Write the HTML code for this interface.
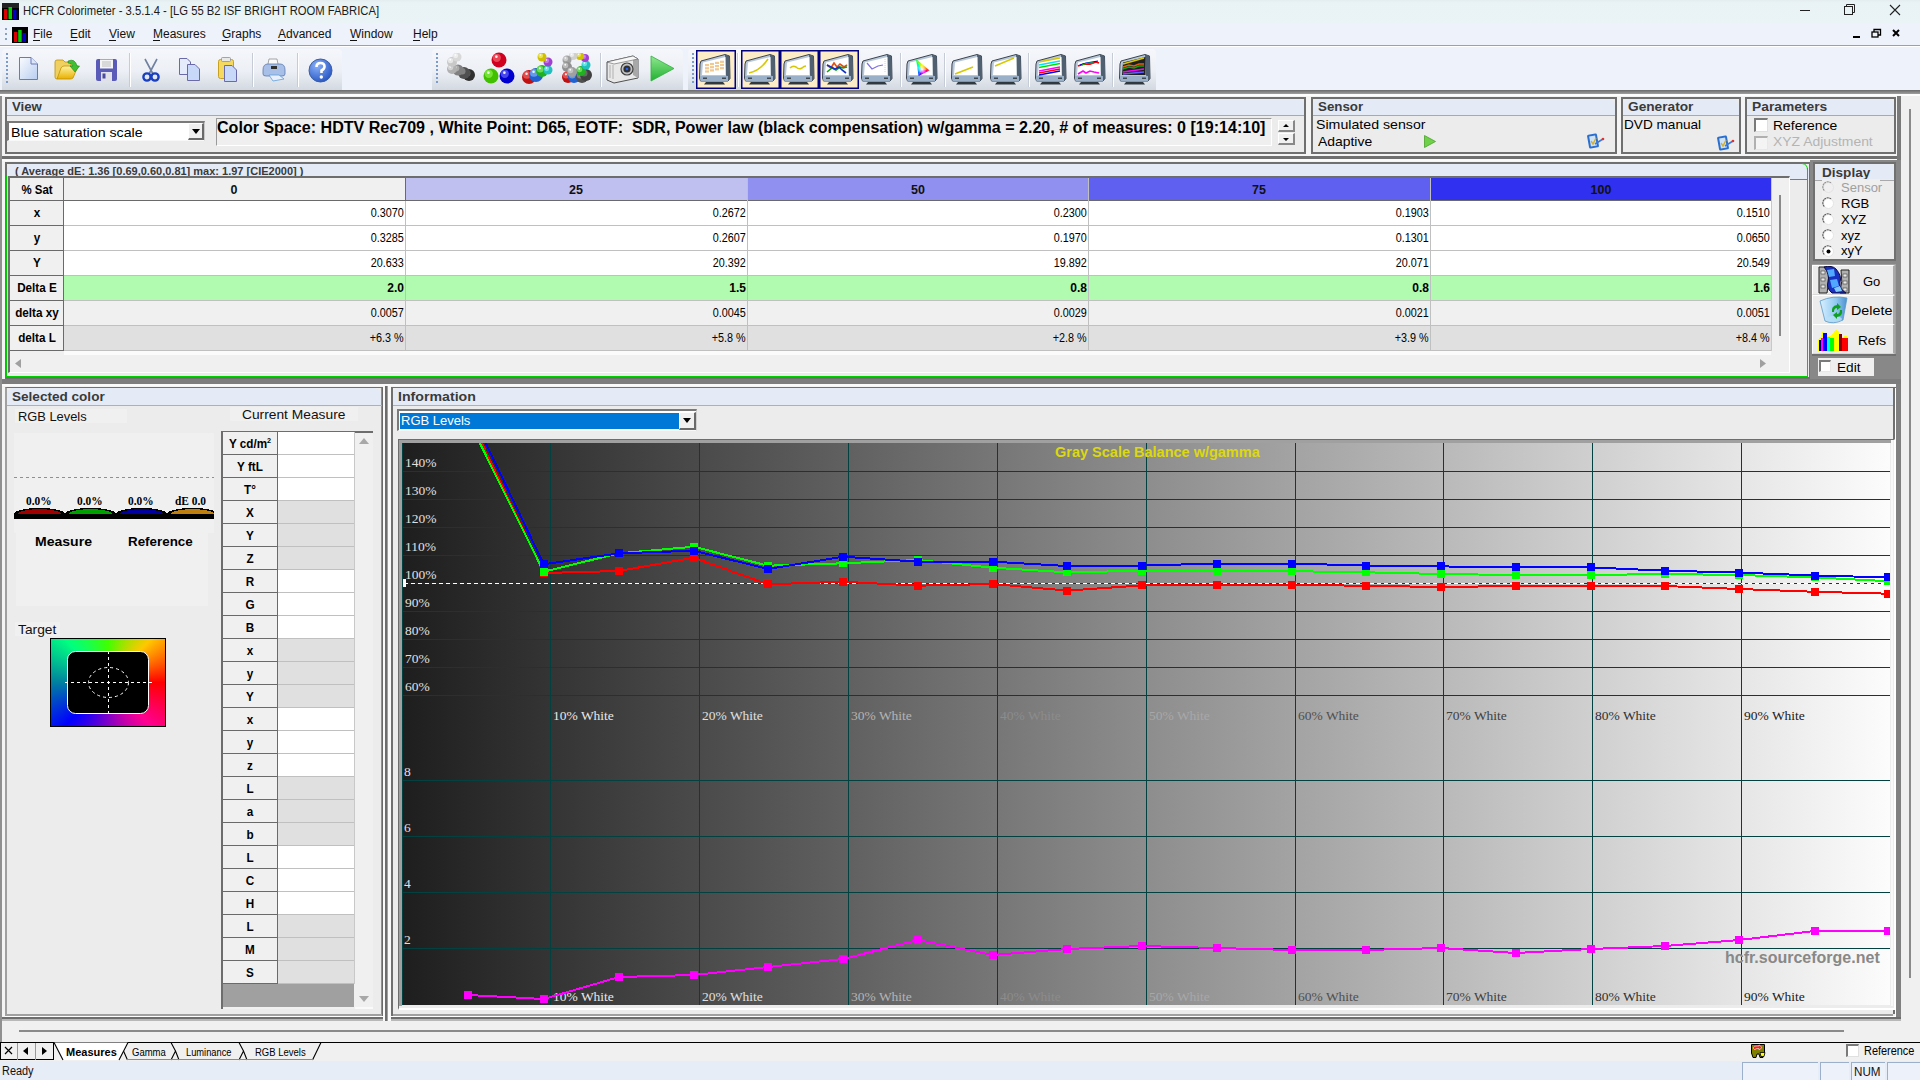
<!DOCTYPE html><html><head><meta charset="utf-8"><style>*{margin:0;padding:0;box-sizing:border-box}html,body{width:1920px;height:1080px;overflow:hidden;background:#f0f0f0;font-family:"Liberation Sans",sans-serif;color:#000;position:relative}.a{position:absolute}.t{position:absolute;white-space:nowrap;line-height:1}svg{display:block}</style></head><body>
<div class="a" style="left:0px;top:0px;width:1920px;height:23px;background:linear-gradient(#e4ecef,#e9f3f5 3px,#eaf4f6);"></div>
<div class="t" style="left:23px;top:5.4px;font-size:12.5px;color:#1b1b1b;font-family:'Liberation Sans',sans-serif;transform:scaleX(0.9);transform-origin:0 0;">HCFR Colorimeter - 3.5.1.4 - [LG 55 B2 ISF BRIGHT ROOM FABRICA]</div>
<svg class="a" style="left:2px;top:3px" width="17" height="17" viewBox="0 0 17 17"><rect x="0" y="0" width="17" height="17" fill="#000"/><rect x="0" y="0" width="17" height="5" fill="#222"/><rect x="2" y="6" width="3.5" height="10" fill="#d00"/><rect x="6.5" y="4" width="3.5" height="12" fill="#0c0"/><rect x="11" y="7" width="3.5" height="9" fill="#00c"/></svg>
<svg class="a" style="left:1790px;top:0" width="130" height="23" viewBox="0 0 130 23"><line x1="10" y1="10.5" x2="20" y2="10.5" stroke="#222" stroke-width="1"/><rect x="54.5" y="6.5" width="8" height="8" fill="none" stroke="#222"/><path d="M56.5 6.5 V4.5 H64.5 V12.5 H62.5" fill="none" stroke="#222"/><path d="M100 5 L110 15 M110 5 L100 15" stroke="#222" stroke-width="1.1"/></svg>
<div class="a" style="left:0px;top:23px;width:1920px;height:22px;background:#eef2fa;"></div>
<div class="a" style="left:0px;top:45px;width:1920px;height:1px;background:#a0a0a0;"></div>
<svg class="a" style="left:4px;top:27px" width="4" height="16"><g fill="#8aa0c0"><rect x="1" y="1" width="2" height="2"/><rect x="1" y="6" width="2" height="2"/><rect x="1" y="11" width="2" height="2"/></g></svg>
<svg class="a" style="left:12px;top:27px" width="16" height="16" viewBox="0 0 16 16"><rect width="16" height="16" fill="#000"/><rect x="2" y="5" width="3.5" height="10" fill="#d00"/><rect x="6.2" y="3" width="3.5" height="12" fill="#0c0"/><rect x="10.5" y="6" width="3.5" height="9" fill="#00c"/></svg>
<div class="t" style="left:33px;top:28.3px;font-size:12px;color:#111;font-family:'Liberation Sans',sans-serif;">File</div>
<div class="a" style="left:33px;top:40px;width:7px;height:1px;background:#111;"></div>
<div class="t" style="left:70px;top:28.3px;font-size:12px;color:#111;font-family:'Liberation Sans',sans-serif;">Edit</div>
<div class="a" style="left:70px;top:40px;width:7px;height:1px;background:#111;"></div>
<div class="t" style="left:109px;top:28.3px;font-size:12px;color:#111;font-family:'Liberation Sans',sans-serif;">View</div>
<div class="a" style="left:109px;top:40px;width:7px;height:1px;background:#111;"></div>
<div class="t" style="left:153px;top:28.3px;font-size:12px;color:#111;font-family:'Liberation Sans',sans-serif;">Measures</div>
<div class="a" style="left:153px;top:40px;width:7px;height:1px;background:#111;"></div>
<div class="t" style="left:222px;top:28.3px;font-size:12px;color:#111;font-family:'Liberation Sans',sans-serif;">Graphs</div>
<div class="a" style="left:222px;top:40px;width:7px;height:1px;background:#111;"></div>
<div class="t" style="left:278px;top:28.3px;font-size:12px;color:#111;font-family:'Liberation Sans',sans-serif;">Advanced</div>
<div class="a" style="left:278px;top:40px;width:7px;height:1px;background:#111;"></div>
<div class="t" style="left:350px;top:28.3px;font-size:12px;color:#111;font-family:'Liberation Sans',sans-serif;">Window</div>
<div class="a" style="left:350px;top:40px;width:7px;height:1px;background:#111;"></div>
<div class="t" style="left:413px;top:28.3px;font-size:12px;color:#111;font-family:'Liberation Sans',sans-serif;">Help</div>
<div class="a" style="left:413px;top:40px;width:7px;height:1px;background:#111;"></div>
<svg class="a" style="left:1845px;top:26px" width="60" height="16" viewBox="0 0 60 16"><rect x="8" y="10" width="7" height="2" fill="#000"/><g fill="none" stroke="#000" stroke-width="1.3"><rect x="27" y="6" width="6" height="5"/><path d="M29 6 V3.5 H35.5 V9 H33"/></g><path d="M48 4 L54 10 M54 4 L48 10" stroke="#000" stroke-width="2"/></svg>
<div class="a" style="left:0px;top:46px;width:1920px;height:44px;background:#eef2fa;"></div>
<div class="a" style="left:0px;top:46px;width:1920px;height:1px;background:#ffffff;"></div>
<div class="a" style="left:2px;top:49px;width:340px;height:41px;background:linear-gradient(#f5f7fb,#eceff5 55%,#d3d9e2);border-radius:4px 4px 0 0;"></div>
<svg class="a" style="left:5px;top:52px" width="4" height="32"><g fill="#7a9ccc"><rect x="1" y="1" width="2" height="2"/><rect x="1" y="5" width="2" height="2"/><rect x="1" y="9" width="2" height="2"/><rect x="1" y="13" width="2" height="2"/><rect x="1" y="17" width="2" height="2"/><rect x="1" y="21" width="2" height="2"/><rect x="1" y="25" width="2" height="2"/><rect x="1" y="29" width="2" height="2"/></g></svg>
<div class="a" style="left:432px;top:49px;width:251px;height:41px;background:linear-gradient(#f5f7fb,#eceff5 55%,#d3d9e2);border-radius:4px 4px 0 0;"></div>
<svg class="a" style="left:435px;top:52px" width="4" height="32"><g fill="#7a9ccc"><rect x="1" y="1" width="2" height="2"/><rect x="1" y="5" width="2" height="2"/><rect x="1" y="9" width="2" height="2"/><rect x="1" y="13" width="2" height="2"/><rect x="1" y="17" width="2" height="2"/><rect x="1" y="21" width="2" height="2"/><rect x="1" y="25" width="2" height="2"/><rect x="1" y="29" width="2" height="2"/></g></svg>
<div class="a" style="left:688px;top:49px;width:468px;height:41px;background:linear-gradient(#f5f7fb,#eceff5 55%,#d3d9e2);border-radius:4px 4px 0 0;"></div>
<svg class="a" style="left:691px;top:52px" width="4" height="32"><g fill="#7a9ccc"><rect x="1" y="1" width="2" height="2"/><rect x="1" y="5" width="2" height="2"/><rect x="1" y="9" width="2" height="2"/><rect x="1" y="13" width="2" height="2"/><rect x="1" y="17" width="2" height="2"/><rect x="1" y="21" width="2" height="2"/><rect x="1" y="25" width="2" height="2"/><rect x="1" y="29" width="2" height="2"/></g></svg>
<div class="a" style="left:0px;top:90px;width:1920px;height:4px;background:linear-gradient(#6a6a6a,#a0a0a0);"></div>
<div class="a" style="left:0px;top:94px;width:1920px;height:2px;background:#fdfdfd;"></div>
<div class="a" style="left:129px;top:53px;width:1px;height:34px;background:#c5ccd6;"></div>
<div class="a" style="left:130px;top:53px;width:1px;height:34px;background:#ffffff;"></div>
<div class="a" style="left:252px;top:53px;width:1px;height:34px;background:#c5ccd6;"></div>
<div class="a" style="left:253px;top:53px;width:1px;height:34px;background:#ffffff;"></div>
<div class="a" style="left:297px;top:53px;width:1px;height:34px;background:#c5ccd6;"></div>
<div class="a" style="left:298px;top:53px;width:1px;height:34px;background:#ffffff;"></div>
<div class="a" style="left:600px;top:53px;width:1px;height:34px;background:#c5ccd6;"></div>
<div class="a" style="left:601px;top:53px;width:1px;height:34px;background:#ffffff;"></div>
<div class="a" style="left:737px;top:53px;width:1px;height:34px;background:#c5ccd6;"></div>
<div class="a" style="left:738px;top:53px;width:1px;height:34px;background:#ffffff;"></div>
<div class="a" style="left:900px;top:53px;width:1px;height:34px;background:#c5ccd6;"></div>
<div class="a" style="left:901px;top:53px;width:1px;height:34px;background:#ffffff;"></div>
<div class="a" style="left:944px;top:53px;width:1px;height:34px;background:#c5ccd6;"></div>
<div class="a" style="left:945px;top:53px;width:1px;height:34px;background:#ffffff;"></div>
<div class="a" style="left:1028px;top:53px;width:1px;height:34px;background:#c5ccd6;"></div>
<div class="a" style="left:1029px;top:53px;width:1px;height:34px;background:#ffffff;"></div>
<div class="a" style="left:1112px;top:53px;width:1px;height:34px;background:#c5ccd6;"></div>
<div class="a" style="left:1113px;top:53px;width:1px;height:34px;background:#ffffff;"></div>
<svg class="a" style="left:18px;top:56px" width="21" height="25" viewBox="0 0 21 25"><defs><linearGradient id="nd" x1="0" y1="0" x2="1" y2="1"><stop offset="0" stop-color="#fafcff"/><stop offset="1" stop-color="#b8cdf0"/></linearGradient></defs><path d="M1.5 1.5 H13 L19.5 8 V23.5 H1.5 Z" fill="url(#nd)" stroke="#6a7ab8" stroke-width="1"/><path d="M13 1.5 V8 H19.5" fill="#dde6f8" stroke="#6a7ab8" stroke-width="1"/></svg>
<svg class="a" style="left:54px;top:58px" width="26" height="23" viewBox="0 0 26 23"><defs><linearGradient id="of" x1="0" y1="0" x2="0" y2="1"><stop offset="0" stop-color="#fff2a0"/><stop offset="1" stop-color="#e8b000"/></linearGradient></defs><path d="M1 4 Q1 2 3 2 H9 L11 4 H17 V8 L3 21 Q1 21 1 19 Z" fill="#f0d060" stroke="#c09000" stroke-width="0.8"/><path d="M3 21 L7 10 Q8 8 10 8 H24 L19 20 Q18 21 16 21 Z" fill="url(#of)" stroke="#c09000" stroke-width="0.8"/><path d="M14 3 Q21 0 23 8 L25.5 8 L21 14 L16 8 L19 8 Q18 5 14 5Z" fill="#40c030" stroke="#208020" stroke-width="0.6"/></svg>
<svg class="a" style="left:95px;top:58px" width="23" height="24" viewBox="0 0 23 24"><rect x="1" y="1" width="21" height="22" rx="2" fill="#5a5ab8"/><rect x="5" y="1.5" width="13" height="9" fill="#f4f4f4"/><path d="M7 4 H16 M7 6 H16 M7 8 H16" stroke="#b0b0b0" stroke-width="0.8"/><rect x="6" y="14" width="11" height="9" fill="#e0e0e8"/><rect x="7.5" y="15.5" width="3" height="5" fill="#4a4aa0"/></svg>
<svg class="a" style="left:142px;top:58px" width="18" height="24" viewBox="0 0 18 24"><path d="M3 1 L11 16 M15 1 L7 16" stroke="#7080a0" stroke-width="1.6"/><circle cx="5" cy="19" r="3.6" fill="none" stroke="#1a40c0" stroke-width="2.4"/><circle cx="13" cy="19" r="3.6" fill="none" stroke="#1a40c0" stroke-width="2.4"/></svg>
<svg class="a" style="left:178px;top:57px" width="23" height="25" viewBox="0 0 23 25"><path d="M1.5 1.5 H9 L12.5 5 V17.5 H1.5Z" fill="#e4ecfc" stroke="#6a6aa8" stroke-width="1"/><path d="M9.5 7.5 H17 L21.5 12 V23.5 H9.5Z" fill="#c8d8f8" stroke="#6a6aa8" stroke-width="1"/></svg>
<svg class="a" style="left:217px;top:57px" width="23" height="26" viewBox="0 0 23 26"><rect x="1.5" y="2.5" width="15" height="19" rx="2" fill="#f4d860" stroke="#c8a020" stroke-width="1"/><rect x="4.5" y="0.5" width="9" height="4" rx="1" fill="#e8e8e8" stroke="#909090" stroke-width="0.8"/><path d="M7.5 8.5 H15 L19.5 13 V24.5 H7.5Z" fill="#c8d8f8" stroke="#6a6aa8" stroke-width="1"/></svg>
<svg class="a" style="left:262px;top:58px" width="24" height="24" viewBox="0 0 24 24"><path d="M6 6 L7 1 H15 L16 6" fill="#fafafa" stroke="#909090" stroke-width="0.8"/><path d="M1 12 Q1 6 6 6 H18 Q23 6 23 12 V16 Q23 18 20 18 H4 Q1 18 1 16Z" fill="#a8c0e8" stroke="#5a78b0" stroke-width="0.8"/><rect x="9" y="8" width="6" height="3" fill="#303030"/><path d="M7 17 L17 17 L22 21 L11 23 Z" fill="#e8f0ff" stroke="#60a0d8" stroke-width="0.8"/></svg>
<svg class="a" style="left:308px;top:58px" width="25" height="25" viewBox="0 0 25 25"><defs><radialGradient id="hg" cx="0.35" cy="0.3" r="0.8"><stop offset="0" stop-color="#8ab0f8"/><stop offset="1" stop-color="#2050c0"/></radialGradient></defs><circle cx="12.5" cy="12.5" r="11.5" fill="url(#hg)" stroke="#40609a" stroke-width="1"/><path d="M8.5 9 Q8.5 5 12.5 5 Q16.5 5 16.5 8.5 Q16.5 11 13.5 12.5 V15" fill="none" stroke="#fff" stroke-width="2.6"/><circle cx="13.3" cy="19" r="1.7" fill="#fff"/></svg>
<svg class="a" style="left:444px;top:53px" width="32" height="32" viewBox="0 0 32 32"><circle cx="25" cy="22" r="6" fill="#303030"/><circle cx="23.2" cy="20.2" r="3.3000000000000003" fill="#888" opacity="0.55"/><circle cx="22.9" cy="19.3" r="1.08" fill="#fff" opacity="0.9"/><circle cx="20" cy="20" r="6" fill="#505050"/><circle cx="18.2" cy="18.2" r="3.3000000000000003" fill="#aaa" opacity="0.55"/><circle cx="17.9" cy="17.3" r="1.08" fill="#fff" opacity="0.9"/><circle cx="14" cy="17" r="5.5" fill="#808080"/><circle cx="12.35" cy="15.35" r="3.0250000000000004" fill="#ccc" opacity="0.55"/><circle cx="12.075" cy="14.525" r="0.99" fill="#fff" opacity="0.9"/><circle cx="8" cy="16" r="5" fill="#b0b0b0"/><circle cx="6.5" cy="14.5" r="2.75" fill="#eee" opacity="0.55"/><circle cx="6.25" cy="13.75" r="0.8999999999999999" fill="#fff" opacity="0.9"/><circle cx="8" cy="9" r="5" fill="#c8c8c8"/><circle cx="6.5" cy="7.5" r="2.75" fill="#fff" opacity="0.55"/><circle cx="6.25" cy="6.75" r="0.8999999999999999" fill="#fff" opacity="0.9"/><circle cx="13" cy="4" r="4.5" fill="#d8d8d8"/><circle cx="11.65" cy="2.6500000000000004" r="2.475" fill="#fff" opacity="0.55"/><circle cx="11.425" cy="1.975" r="0.8099999999999999" fill="#fff" opacity="0.9"/></svg>
<svg class="a" style="left:482px;top:52px" width="33" height="33" viewBox="0 0 33 33"><circle cx="9" cy="24" r="7.5" fill="#40c000"/><circle cx="6.75" cy="21.75" r="4.125" fill="#a0ff60" opacity="0.55"/><circle cx="6.375" cy="20.625" r="1.3499999999999999" fill="#fff" opacity="0.9"/><circle cx="25" cy="24" r="7.5" fill="#0000d0"/><circle cx="22.75" cy="21.75" r="4.125" fill="#8080ff" opacity="0.55"/><circle cx="22.375" cy="20.625" r="1.3499999999999999" fill="#fff" opacity="0.9"/><circle cx="17" cy="8" r="7.5" fill="#d00020"/><circle cx="14.75" cy="5.75" r="4.125" fill="#ff8080" opacity="0.55"/><circle cx="14.375" cy="4.625" r="1.3499999999999999" fill="#fff" opacity="0.9"/></svg>
<svg class="a" style="left:522px;top:53px" width="32" height="32" viewBox="0 0 32 32"><circle cx="7" cy="24" r="7" fill="#c01010"/><circle cx="4.9" cy="21.9" r="3.8500000000000005" fill="#ff8080" opacity="0.55"/><circle cx="4.550000000000001" cy="20.85" r="1.26" fill="#fff" opacity="0.9"/><circle cx="14" cy="22" r="7" fill="#2060d0"/><circle cx="11.9" cy="19.9" r="3.8500000000000005" fill="#a0c8ff" opacity="0.55"/><circle cx="11.55" cy="18.85" r="1.26" fill="#fff" opacity="0.9"/><circle cx="20" cy="18" r="6" fill="#20b020"/><circle cx="18.2" cy="16.2" r="3.3000000000000003" fill="#a0ff80" opacity="0.55"/><circle cx="17.9" cy="15.3" r="1.08" fill="#fff" opacity="0.9"/><circle cx="26" cy="17" r="4.5" fill="#20c0c0"/><circle cx="24.65" cy="15.65" r="2.475" fill="#a0ffff" opacity="0.55"/><circle cx="24.425" cy="14.975" r="0.8099999999999999" fill="#fff" opacity="0.9"/><circle cx="26" cy="9" r="4.5" fill="#a040d0"/><circle cx="24.65" cy="7.65" r="2.475" fill="#f0a0ff" opacity="0.55"/><circle cx="24.425" cy="6.975" r="0.8099999999999999" fill="#fff" opacity="0.9"/><circle cx="20" cy="4" r="4.5" fill="#d0c000"/><circle cx="18.65" cy="2.6500000000000004" r="2.475" fill="#ffffa0" opacity="0.55"/><circle cx="18.425" cy="1.975" r="0.8099999999999999" fill="#fff" opacity="0.9"/></svg>
<svg class="a" style="left:561px;top:53px" width="32" height="32" viewBox="0 0 32 32"><circle cx="7" cy="24" r="6" fill="#c01010"/><circle cx="5.2" cy="22.2" r="3.3000000000000003" fill="#ff8080" opacity="0.55"/><circle cx="4.9" cy="21.3" r="1.08" fill="#fff" opacity="0.9"/><circle cx="13" cy="24" r="6" fill="#2060d0"/><circle cx="11.2" cy="22.2" r="3.3000000000000003" fill="#a0c8ff" opacity="0.55"/><circle cx="10.9" cy="21.3" r="1.08" fill="#fff" opacity="0.9"/><circle cx="21" cy="24" r="6" fill="#505050"/><circle cx="19.2" cy="22.2" r="3.3000000000000003" fill="#aaa" opacity="0.55"/><circle cx="18.9" cy="21.3" r="1.08" fill="#fff" opacity="0.9"/><circle cx="25" cy="22" r="6" fill="#404040"/><circle cx="23.2" cy="20.2" r="3.3000000000000003" fill="#888" opacity="0.55"/><circle cx="22.9" cy="19.3" r="1.08" fill="#fff" opacity="0.9"/><circle cx="20" cy="18" r="5" fill="#20b020"/><circle cx="18.5" cy="16.5" r="2.75" fill="#a0ff80" opacity="0.55"/><circle cx="18.25" cy="15.75" r="0.8999999999999999" fill="#fff" opacity="0.9"/><circle cx="25" cy="12" r="4.5" fill="#20c0c0"/><circle cx="23.65" cy="10.65" r="2.475" fill="#a0ffff" opacity="0.55"/><circle cx="23.425" cy="9.975" r="0.8099999999999999" fill="#fff" opacity="0.9"/><circle cx="24" cy="5" r="4" fill="#a040d0"/><circle cx="22.8" cy="3.8" r="2.2" fill="#f0a0ff" opacity="0.55"/><circle cx="22.6" cy="3.2" r="0.72" fill="#fff" opacity="0.9"/><circle cx="19" cy="3" r="4" fill="#d0c000"/><circle cx="17.8" cy="1.8" r="2.2" fill="#ffffa0" opacity="0.55"/><circle cx="17.6" cy="1.2" r="0.72" fill="#fff" opacity="0.9"/><circle cx="12" cy="3" r="4" fill="#d0d0d0"/><circle cx="10.8" cy="1.8" r="2.2" fill="#fff" opacity="0.55"/><circle cx="10.6" cy="1.2" r="0.72" fill="#fff" opacity="0.9"/><circle cx="6" cy="7" r="4.5" fill="#a0a0a0"/><circle cx="4.65" cy="5.65" r="2.475" fill="#eee" opacity="0.55"/><circle cx="4.425" cy="4.975" r="0.8099999999999999" fill="#fff" opacity="0.9"/><circle cx="6" cy="14" r="5" fill="#909090"/><circle cx="4.5" cy="12.5" r="2.75" fill="#ddd" opacity="0.55"/><circle cx="4.25" cy="11.75" r="0.8999999999999999" fill="#fff" opacity="0.9"/><circle cx="11" cy="19" r="5" fill="#a0a0a0"/><circle cx="9.5" cy="17.5" r="2.75" fill="#ddd" opacity="0.55"/><circle cx="9.25" cy="16.75" r="0.8999999999999999" fill="#fff" opacity="0.9"/></svg>
<svg class="a" style="left:606px;top:54px" width="33" height="30" viewBox="0 0 33 30"><path d="M1 8 L27 2 L32 5 V24 L8 29 L1 26 Z" fill="#e8e8e8" stroke="#505050" stroke-width="1"/><path d="M27 2 L32 5 V24 L27 21Z" fill="#a8a8a8"/><path d="M1 8 L27 2 L32 5 L8 10Z" fill="#f8f8f8" stroke="#606060" stroke-width="0.6"/><circle cx="21" cy="15" r="6" fill="#c0c0c0" stroke="#404040" stroke-width="1.2"/><circle cx="21" cy="15" r="3.6" fill="#303030"/><circle cx="21" cy="15" r="1.3" fill="#2060ff"/><path d="M4 11 V24 M7 11 V25" stroke="#b0b0b0" stroke-width="1"/></svg>
<svg class="a" style="left:650px;top:55px" width="25" height="27" viewBox="0 0 25 27"><defs><linearGradient id="pg" x1="0" y1="0" x2="0" y2="1"><stop offset="0" stop-color="#90e890"/><stop offset="1" stop-color="#20b030"/></linearGradient></defs><path d="M1 1 L24 13.5 L1 26 Z" fill="url(#pg)" stroke="#30b040" stroke-width="0.8"/></svg>
<div class="a" style="left:696px;top:50px;width:40px;height:39px;background:#fdecc8;border:1px solid #000080;box-shadow:inset 0 0 0 0.5px #000080;"></div>
<div class="a" style="left:741px;top:50px;width:39px;height:39px;background:#fdecc8;border:1px solid #000080;box-shadow:inset 0 0 0 0.5px #000080;"></div>
<div class="a" style="left:780px;top:50px;width:39px;height:39px;background:#fdecc8;border:1px solid #000080;box-shadow:inset 0 0 0 0.5px #000080;"></div>
<div class="a" style="left:819px;top:50px;width:40px;height:39px;background:#fdecc8;border:1px solid #000080;box-shadow:inset 0 0 0 0.5px #000080;"></div>
<svg class="a" style="left:699px;top:53px" width="32" height="32" viewBox="0 0 32 32"><defs></defs><path d="M2 8 L26 1.5 L30.5 3 L31 25.5 L29 28 H1.5 L0.5 25 L1 11 Z" fill="#b8c8d8" stroke="#3a4450" stroke-width="1"/><path d="M26 1.5 L30.5 3 L31 25.5 L29 28 L27 22Z" fill="#506070"/><path d="M4 9.5 L26.5 4 V22 H3 Z" fill="#ffffff"/><path d="M1 23 H29 L29 28 H1.5Z" fill="#9ab0c8"/><rect x="4" y="24.5" width="4" height="1.5" fill="#404850"/><rect x="23" y="24.5" width="4" height="1.5" fill="#404850"/><path d="M7 29 H24 L26 31.5 H5Z" fill="#303840"/><g fill="#f0c890"><rect x="6" y="11.0" width="4" height="2.2"/><rect x="11" y="9.9" width="4" height="2.2"/><rect x="16" y="8.8" width="4" height="2.2"/><rect x="21" y="7.699999999999999" width="4" height="2.2"/><rect x="6" y="14.2" width="4" height="2.2"/><rect x="11" y="13.1" width="4" height="2.2"/><rect x="16" y="12.0" width="4" height="2.2"/><rect x="21" y="10.899999999999999" width="4" height="2.2"/><rect x="6" y="17.4" width="4" height="2.2"/><rect x="11" y="16.299999999999997" width="4" height="2.2"/><rect x="16" y="15.2" width="4" height="2.2"/><rect x="21" y="14.099999999999998" width="4" height="2.2"/></g></svg>
<svg class="a" style="left:744px;top:53px" width="32" height="32" viewBox="0 0 32 32"><defs></defs><path d="M2 8 L26 1.5 L30.5 3 L31 25.5 L29 28 H1.5 L0.5 25 L1 11 Z" fill="#b8c8d8" stroke="#3a4450" stroke-width="1"/><path d="M26 1.5 L30.5 3 L31 25.5 L29 28 L27 22Z" fill="#506070"/><path d="M4 9.5 L26.5 4 V22 H3 Z" fill="#ffffff"/><path d="M1 23 H29 L29 28 H1.5Z" fill="#9ab0c8"/><rect x="4" y="24.5" width="4" height="1.5" fill="#404850"/><rect x="23" y="24.5" width="4" height="1.5" fill="#404850"/><path d="M7 29 H24 L26 31.5 H5Z" fill="#303840"/><path d="M5 20 Q16 18 24 6" fill="none" stroke="#d8c800" stroke-width="1.6"/></svg>
<svg class="a" style="left:783px;top:53px" width="32" height="32" viewBox="0 0 32 32"><defs></defs><path d="M2 8 L26 1.5 L30.5 3 L31 25.5 L29 28 H1.5 L0.5 25 L1 11 Z" fill="#b8c8d8" stroke="#3a4450" stroke-width="1"/><path d="M26 1.5 L30.5 3 L31 25.5 L29 28 L27 22Z" fill="#506070"/><path d="M4 9.5 L26.5 4 V22 H3 Z" fill="#ffffff"/><path d="M1 23 H29 L29 28 H1.5Z" fill="#9ab0c8"/><rect x="4" y="24.5" width="4" height="1.5" fill="#404850"/><rect x="23" y="24.5" width="4" height="1.5" fill="#404850"/><path d="M7 29 H24 L26 31.5 H5Z" fill="#303840"/><path d="M7 15 Q10 12 13 14 Q16 17 19 15 Q21 13 23 13" fill="none" stroke="#d8c800" stroke-width="1.6"/></svg>
<svg class="a" style="left:822px;top:53px" width="32" height="32" viewBox="0 0 32 32"><defs></defs><path d="M2 8 L26 1.5 L30.5 3 L31 25.5 L29 28 H1.5 L0.5 25 L1 11 Z" fill="#b8c8d8" stroke="#3a4450" stroke-width="1"/><path d="M26 1.5 L30.5 3 L31 25.5 L29 28 L27 22Z" fill="#506070"/><path d="M4 9.5 L26.5 4 V22 H3 Z" fill="#ffffff"/><path d="M1 23 H29 L29 28 H1.5Z" fill="#9ab0c8"/><rect x="4" y="24.5" width="4" height="1.5" fill="#404850"/><rect x="23" y="24.5" width="4" height="1.5" fill="#404850"/><path d="M7 29 H24 L26 31.5 H5Z" fill="#303840"/><path d="M5 12 L9 15 L12 10 L15 14 L18 11 L22 14 L25 12" fill="none" stroke="#e05010" stroke-width="1.6"/><path d="M5 19 L10 15 L14 17 L18 14 L21 15 L25 14" fill="none" stroke="#10a010" stroke-width="1.6"/><path d="M5 12 L9 14 L13 16 L17 14 L20 17 L24 20" fill="none" stroke="#1030d0" stroke-width="1.6"/></svg>
<svg class="a" style="left:861px;top:53px" width="32" height="32" viewBox="0 0 32 32"><defs></defs><path d="M2 8 L26 1.5 L30.5 3 L31 25.5 L29 28 H1.5 L0.5 25 L1 11 Z" fill="#b8c8d8" stroke="#3a4450" stroke-width="1"/><path d="M26 1.5 L30.5 3 L31 25.5 L29 28 L27 22Z" fill="#506070"/><path d="M4 9.5 L26.5 4 V22 H3 Z" fill="#ffffff"/><path d="M1 23 H29 L29 28 H1.5Z" fill="#9ab0c8"/><rect x="4" y="24.5" width="4" height="1.5" fill="#404850"/><rect x="23" y="24.5" width="4" height="1.5" fill="#404850"/><path d="M7 29 H24 L26 31.5 H5Z" fill="#303840"/><path d="M6 10 L11 16 L17 13 L22 12" fill="none" stroke="#8070e0" stroke-width="1.2"/><path d="M24 6 V20" stroke="#c0e0c0" stroke-dasharray="1 1"/></svg>
<svg class="a" style="left:906px;top:53px" width="32" height="32" viewBox="0 0 32 32"><defs></defs><path d="M2 8 L26 1.5 L30.5 3 L31 25.5 L29 28 H1.5 L0.5 25 L1 11 Z" fill="#b8c8d8" stroke="#3a4450" stroke-width="1"/><path d="M26 1.5 L30.5 3 L31 25.5 L29 28 L27 22Z" fill="#506070"/><path d="M4 9.5 L26.5 4 V22 H3 Z" fill="#ffffff"/><path d="M1 23 H29 L29 28 H1.5Z" fill="#9ab0c8"/><rect x="4" y="24.5" width="4" height="1.5" fill="#404850"/><rect x="23" y="24.5" width="4" height="1.5" fill="#404850"/><path d="M7 29 H24 L26 31.5 H5Z" fill="#303840"/><defs><linearGradient id="tg1" gradientUnits="userSpaceOnUse" x1="10" y1="6" x2="23.6" y2="17.5"><stop offset="0" stop-color="#00ff00"/><stop offset="0.5" stop-color="#ffff00"/><stop offset="1" stop-color="#ff0000"/></linearGradient><linearGradient id="tg2" gradientUnits="userSpaceOnUse" x1="23.6" y1="17.5" x2="12.6" y2="23"><stop offset="0" stop-color="#ff0000"/><stop offset="0.5" stop-color="#ff00ff"/><stop offset="1" stop-color="#0000ff"/></linearGradient><linearGradient id="tg3" gradientUnits="userSpaceOnUse" x1="12.6" y1="23" x2="10" y2="6"><stop offset="0" stop-color="#0000ff"/><stop offset="0.5" stop-color="#00ffff"/><stop offset="1" stop-color="#00ff00"/></linearGradient><radialGradient id="tgw" cx="0.5" cy="0.5" r="0.5"><stop offset="0" stop-color="#fff"/><stop offset="1" stop-color="#fff" stop-opacity="0"/></radialGradient></defs><path d="M10 6 L23.6 17.5 L15.5 16Z" fill="url(#tg1)"/><path d="M23.6 17.5 L12.6 23 L15.5 16Z" fill="url(#tg2)"/><path d="M12.6 23 L10 6 L15.5 16Z" fill="url(#tg3)"/><circle cx="16" cy="16.5" r="4.5" fill="url(#tgw)"/></svg>
<svg class="a" style="left:951px;top:53px" width="32" height="32" viewBox="0 0 32 32"><defs></defs><path d="M2 8 L26 1.5 L30.5 3 L31 25.5 L29 28 H1.5 L0.5 25 L1 11 Z" fill="#b8c8d8" stroke="#3a4450" stroke-width="1"/><path d="M26 1.5 L30.5 3 L31 25.5 L29 28 L27 22Z" fill="#506070"/><path d="M4 9.5 L26.5 4 V22 H3 Z" fill="#ffffff"/><path d="M1 23 H29 L29 28 H1.5Z" fill="#9ab0c8"/><rect x="4" y="24.5" width="4" height="1.5" fill="#404850"/><rect x="23" y="24.5" width="4" height="1.5" fill="#404850"/><path d="M7 29 H24 L26 31.5 H5Z" fill="#303840"/><path d="M4 21 L22 14" fill="none" stroke="#d8c800" stroke-width="1.6"/></svg>
<svg class="a" style="left:990px;top:53px" width="32" height="32" viewBox="0 0 32 32"><defs></defs><path d="M2 8 L26 1.5 L30.5 3 L31 25.5 L29 28 H1.5 L0.5 25 L1 11 Z" fill="#b8c8d8" stroke="#3a4450" stroke-width="1"/><path d="M26 1.5 L30.5 3 L31 25.5 L29 28 L27 22Z" fill="#506070"/><path d="M4 9.5 L26.5 4 V22 H3 Z" fill="#ffffff"/><path d="M1 23 H29 L29 28 H1.5Z" fill="#9ab0c8"/><rect x="4" y="24.5" width="4" height="1.5" fill="#404850"/><rect x="23" y="24.5" width="4" height="1.5" fill="#404850"/><path d="M7 29 H24 L26 31.5 H5Z" fill="#303840"/><path d="M5 13 L24 5" fill="none" stroke="#d8c800" stroke-width="1.6"/></svg>
<svg class="a" style="left:1035px;top:53px" width="32" height="32" viewBox="0 0 32 32"><defs></defs><path d="M2 8 L26 1.5 L30.5 3 L31 25.5 L29 28 H1.5 L0.5 25 L1 11 Z" fill="#b8c8d8" stroke="#3a4450" stroke-width="1"/><path d="M26 1.5 L30.5 3 L31 25.5 L29 28 L27 22Z" fill="#506070"/><path d="M4 9.5 L26.5 4 V22 H3 Z" fill="#ffffff"/><path d="M1 23 H29 L29 28 H1.5Z" fill="#9ab0c8"/><rect x="4" y="24.5" width="4" height="1.5" fill="#404850"/><rect x="23" y="24.5" width="4" height="1.5" fill="#404850"/><path d="M7 29 H24 L26 31.5 H5Z" fill="#303840"/><path d="M4 9 L25 5" stroke="#d8c800" stroke-width="1.3"/><path d="M4 12 L25 8" stroke="#00e0ff" stroke-width="1.3"/><path d="M4 14.5 L25 10.5" stroke="#00e000" stroke-width="1.3"/><path d="M4 18 L25 14" stroke="#ff00ff" stroke-width="1.3"/><path d="M4 20 L25 16" stroke="#ff0000" stroke-width="1.3"/><path d="M4 22 L25 18" stroke="#0000ff" stroke-width="1.3"/></svg>
<svg class="a" style="left:1074px;top:53px" width="32" height="32" viewBox="0 0 32 32"><defs></defs><path d="M2 8 L26 1.5 L30.5 3 L31 25.5 L29 28 H1.5 L0.5 25 L1 11 Z" fill="#b8c8d8" stroke="#3a4450" stroke-width="1"/><path d="M26 1.5 L30.5 3 L31 25.5 L29 28 L27 22Z" fill="#506070"/><path d="M4 9.5 L26.5 4 V22 H3 Z" fill="#ffffff"/><path d="M1 23 H29 L29 28 H1.5Z" fill="#9ab0c8"/><rect x="4" y="24.5" width="4" height="1.5" fill="#404850"/><rect x="23" y="24.5" width="4" height="1.5" fill="#404850"/><path d="M7 29 H24 L26 31.5 H5Z" fill="#303840"/><path d="M4 13 L10 11 L16 11 L22 9 L25 10" stroke="#ff0000" stroke-width="1.8" fill="none"/><path d="M6 12 L12 10 L18 9 L24 8" stroke="#0000ff" stroke-width="1.2" fill="none"/><path d="M8 12 L14 10 L20 10" stroke="#00c000" stroke-width="1.2" fill="none"/><path d="M4 21 L9 18 L12 20 L16 18 L20 19 L25 20" stroke="#ff00ff" stroke-width="1.6" fill="none"/></svg>
<svg class="a" style="left:1119px;top:53px" width="32" height="32" viewBox="0 0 32 32"><defs></defs><path d="M2 8 L26 1.5 L30.5 3 L31 25.5 L29 28 H1.5 L0.5 25 L1 11 Z" fill="#b8c8d8" stroke="#3a4450" stroke-width="1"/><path d="M26 1.5 L30.5 3 L31 25.5 L29 28 L27 22Z" fill="#506070"/><path d="M4 9.5 L26.5 4 V22 H3 Z" fill="#202020"/><path d="M1 23 H29 L29 28 H1.5Z" fill="#9ab0c8"/><rect x="4" y="24.5" width="4" height="1.5" fill="#404850"/><rect x="23" y="24.5" width="4" height="1.5" fill="#404850"/><path d="M7 29 H24 L26 31.5 H5Z" fill="#303840"/><path d="M4 11 L25 5" stroke="#d8c800" stroke-width="1.4"/><path d="M4 14 L10 12 L15 13 L20 11 L25 11" stroke="#e06010" stroke-width="1.4" fill="none"/><path d="M4 16 L10 14 L15 15 L20 13 L25 13" stroke="#10a010" stroke-width="1.4" fill="none"/><path d="M4 19 L25 16" stroke="#ff00ff" stroke-width="1.3"/><path d="M4 21 L25 19" stroke="#6060ff" stroke-width="1.3"/></svg>
<div class="a" style="left:0px;top:96px;width:2px;height:945px;background:#909090;"></div>
<div class="a" style="left:1901px;top:96px;width:19px;height:924px;background:#f0f0f0;"></div>
<div class="a" style="left:1909px;top:109px;width:2px;height:869px;background:#8a8a8a;"></div>
<div class="a" style="left:19px;top:1030px;width:1825px;height:2px;background:#8a8a8a;"></div>
<div class="a" style="left:2px;top:96px;width:1899px;height:60px;background:#f4f4f4;"></div>
<div class="a" style="left:2px;top:156px;width:1899px;height:3px;background:#6f6f6f;"></div>
<div class="a" style="left:2px;top:159px;width:1899px;height:2px;background:#fafafa;"></div>
<div class="a" style="left:1897px;top:96px;width:4px;height:64px;background:#7a7a7a;"></div>
<div class="a" style="left:5px;top:97px;width:1301px;height:57px;background:#ececec;border:2px solid #6f6f6f;"></div>
<div class="a" style="left:7px;top:99px;width:1297px;height:16px;background:#e4ebf6;border-radius:7px 7px 0 0;"></div>
<div class="a" style="left:7px;top:115px;width:1297px;height:1px;background:#a9a9a9;"></div>
<div class="t" style="left:12px;top:100.8px;font-size:12px;font-weight:bold;color:#3a3a3a;font-family:'Liberation Sans',sans-serif;transform:scaleX(1.1);transform-origin:0 0;">View</div>
<div class="a" style="left:7px;top:121px;width:198px;height:20px;background:#fff;border-top:2px solid #7a7a7a;border-left:2px solid #7a7a7a;border-right:1px solid #c8c8c8;border-bottom:1px solid #f8f8f8;"></div>
<div class="t" style="left:11px;top:125.5px;font-size:13px;color:#000;font-family:'Liberation Sans',sans-serif;transform:scaleX(1.09);transform-origin:0 0;">Blue saturation scale</div>
<div class="a" style="left:188px;top:123px;width:16px;height:17px;background:#f0f0f0;border-right:2px solid #6a6a6a;border-bottom:2px solid #6a6a6a;border-top:1px solid #fff;border-left:1px solid #fff;"></div>
<svg class="a" style="left:192px;top:129px" width="9" height="6"><path d="M0 0 H8 L4 5 Z" fill="#000"/></svg>
<div class="a" style="left:216px;top:118px;width:1056px;height:28px;background:#efefef;border-top:1px solid #9a9a9a;border-left:1px solid #9a9a9a;border-bottom:1px solid #fff;border-right:1px solid #fff;"></div>
<div class="t" style="left:217px;top:119.9px;font-size:16px;font-weight:bold;color:#000;font-family:'Liberation Sans',sans-serif;transform:scaleX(1.004);transform-origin:0 0;">Color Space: HDTV Rec709 , White Point: D65, EOTF:&nbsp; SDR, Power law (black compensation) w/gamma = 2.20, # of measures: 0 [19:14:10]</div>
<div class="a" style="left:1278px;top:120px;width:17px;height:12px;background:#f0f0f0;border:1px solid #fff;border-right:2px solid #888;border-bottom:2px solid #888;"></div>
<div class="a" style="left:1278px;top:133px;width:17px;height:12px;background:#f0f0f0;border:1px solid #fff;border-right:2px solid #888;border-bottom:2px solid #888;"></div>
<svg class="a" style="left:1282px;top:123px" width="8" height="20"><path d="M1 4 H7 L4 1 Z M1 15 H7 L4 18 Z" fill="#000"/></svg>
<div class="a" style="left:1311px;top:97px;width:306px;height:57px;background:#ececec;border:2px solid #6f6f6f;"></div>
<div class="a" style="left:1313px;top:99px;width:302px;height:16px;background:#e4ebf6;border-radius:7px 7px 0 0;"></div>
<div class="a" style="left:1313px;top:115px;width:302px;height:1px;background:#a9a9a9;"></div>
<div class="t" style="left:1318px;top:100.8px;font-size:12px;font-weight:bold;color:#3a3a3a;font-family:'Liberation Sans',sans-serif;transform:scaleX(1.11);transform-origin:0 0;">Sensor</div>
<div class="t" style="left:1316px;top:117.5px;font-size:13px;color:#000;font-family:'Liberation Sans',sans-serif;transform:scaleX(1.09);transform-origin:0 0;">Simulated sensor</div>
<div class="t" style="left:1318px;top:134.9px;font-size:13px;color:#000;font-family:'Liberation Sans',sans-serif;transform:scaleX(1.07);transform-origin:0 0;">Adaptive</div>
<svg class="a" style="left:1424px;top:135px" width="12" height="13"><path d="M0.5 0.5 L11.5 6.5 L0.5 12.5 Z" fill="#6fd04a" stroke="#4aa12a" stroke-width="0.8"/></svg>
<svg class="a" style="left:1587px;top:132px" width="18" height="17" viewBox="0 0 18 17"><rect x="1" y="2" width="10" height="14" rx="1.5" fill="#2a6fd0" transform="rotate(-10 6 9)"/><rect x="3" y="4" width="6" height="10" fill="#cfe3f7" transform="rotate(-10 6 9)"/><path d="M4 9 L6 12 L9 6" stroke="#d4b030" stroke-width="1.4" fill="none"/><path d="M8 12 L16 7" stroke="#3a7ad8" stroke-width="1.5"/><circle cx="16" cy="7" r="1.3" fill="#d33"/></svg>
<div class="a" style="left:1621px;top:97px;width:120px;height:57px;background:#ececec;border:2px solid #6f6f6f;"></div>
<div class="a" style="left:1623px;top:99px;width:116px;height:16px;background:#e4ebf6;border-radius:7px 7px 0 0;"></div>
<div class="a" style="left:1623px;top:115px;width:116px;height:1px;background:#a9a9a9;"></div>
<div class="t" style="left:1628px;top:100.8px;font-size:12px;font-weight:bold;color:#3a3a3a;font-family:'Liberation Sans',sans-serif;transform:scaleX(1.14);transform-origin:0 0;">Generator</div>
<div class="t" style="left:1624px;top:117.5px;font-size:13px;color:#000;font-family:'Liberation Sans',sans-serif;transform:scaleX(1.046);transform-origin:0 0;">DVD manual</div>
<svg class="a" style="left:1717px;top:134px" width="18" height="17" viewBox="0 0 18 17"><rect x="1" y="2" width="10" height="14" rx="1.5" fill="#2a6fd0" transform="rotate(-10 6 9)"/><rect x="3" y="4" width="6" height="10" fill="#cfe3f7" transform="rotate(-10 6 9)"/><path d="M4 9 L6 12 L9 6" stroke="#d4b030" stroke-width="1.4" fill="none"/><path d="M8 12 L16 7" stroke="#3a7ad8" stroke-width="1.5"/><circle cx="16" cy="7" r="1.3" fill="#d33"/></svg>
<div class="a" style="left:1745px;top:97px;width:151px;height:57px;background:#ececec;border:2px solid #6f6f6f;"></div>
<div class="a" style="left:1747px;top:99px;width:147px;height:16px;background:#e4ebf6;border-radius:7px 7px 0 0;"></div>
<div class="a" style="left:1747px;top:115px;width:147px;height:1px;background:#a9a9a9;"></div>
<div class="t" style="left:1752px;top:100.8px;font-size:12px;font-weight:bold;color:#3a3a3a;font-family:'Liberation Sans',sans-serif;transform:scaleX(1.15);transform-origin:0 0;">Parameters</div>
<div class="a" style="left:1754px;top:118px;width:14px;height:14px;background:#fff;border-top:2px solid #7a7a7a;border-left:2px solid #7a7a7a;border-right:1px solid #e0e0e0;border-bottom:1px solid #e0e0e0;"></div>
<div class="t" style="left:1773px;top:118.5px;font-size:13px;color:#000;font-family:'Liberation Sans',sans-serif;transform:scaleX(1.07);transform-origin:0 0;">Reference</div>
<div class="a" style="left:1754px;top:136px;width:14px;height:14px;background:#f4f4f4;border-top:2px solid #b0b0b0;border-left:2px solid #b0b0b0;border-right:1px solid #e8e8e8;border-bottom:1px solid #e8e8e8;"></div>
<div class="t" style="left:1773px;top:135.4px;font-size:13px;color:#b4b4b4;font-family:'Liberation Sans',sans-serif;transform:scaleX(1.07);transform-origin:0 0;">XYZ Adjustment</div>
<div class="a" style="left:2px;top:161px;width:1899px;height:219px;background:#f4f4f4;"></div>
<div class="a" style="left:5px;top:162px;width:1806px;height:217px;background:#ececec;border:2px solid #707070;"></div>
<div class="a" style="left:7px;top:164px;width:1802px;height:15px;background:#e4ebf6;border-radius:7px 7px 0 0;"></div>
<div class="t" style="left:15px;top:166.2px;font-size:11px;font-weight:bold;color:#3a3a3a;font-family:'Liberation Sans',sans-serif;">( Average dE: 1.36 [0.69,0.60,0.81] max: 1.97 [CIE2000] )</div>
<div class="a" style="left:6px;top:176px;width:1px;height:201px;background:#00d000;"></div>
<div class="a" style="left:6px;top:376px;width:1802px;height:1px;background:#00d000;"></div>
<div class="a" style="left:1807px;top:168px;width:1px;height:209px;background:#00d000;"></div>
<div class="a" style="left:1790px;top:179px;width:17px;height:1px;background:#00d000;"></div>
<svg class="a" style="left:1801px;top:163px" width="8" height="8"><path d="M1 0.5 Q6.5 1 6.5 7 V8" fill="none" stroke="#00d000"/></svg>
<div class="a" style="left:8px;top:176px;width:1782px;height:197px;background:#f0f0f0;border-top:2px solid #6d6d6d;border-left:2px solid #6d6d6d;border-bottom:1px solid #fff;border-right:1px solid #fff;"></div>
<div class="a" style="left:10px;top:178px;width:54px;height:23px;background:#f0f0f0;"></div>
<div class="a" style="left:63px;top:178px;width:1px;height:173px;background:#6a6a6a;"></div>
<div class="a" style="left:10px;top:200px;width:1762px;height:1px;background:#6a6a6a;"></div>
<div class="t" style="left:37px;top:182.9px;font-size:13px;font-weight:bold;color:#000;font-family:'Liberation Sans',sans-serif;transform:translateX(-50%) scaleX(0.88);">% Sat</div>
<div class="a" style="left:64px;top:178px;width:341px;height:22px;background:#f0f0f0;"></div>
<div class="a" style="left:405px;top:178px;width:1px;height:173px;background:#c0c0c0;"></div>
<div class="t" style="left:234px;top:183.7px;font-size:12.5px;font-weight:bold;color:#111;font-family:'Liberation Sans',sans-serif;transform:translateX(-50%) scaleX(1.0);">0</div>
<div class="a" style="left:406px;top:178px;width:341px;height:22px;background:#c0c0f0;"></div>
<div class="a" style="left:747px;top:178px;width:1px;height:173px;background:#c0c0c0;"></div>
<div class="t" style="left:576px;top:183.7px;font-size:12.5px;font-weight:bold;color:#111;font-family:'Liberation Sans',sans-serif;transform:translateX(-50%) scaleX(1.0);">25</div>
<div class="a" style="left:748px;top:178px;width:340px;height:22px;background:#9090f0;"></div>
<div class="a" style="left:1088px;top:178px;width:1px;height:173px;background:#c0c0c0;"></div>
<div class="t" style="left:918px;top:183.7px;font-size:12.5px;font-weight:bold;color:#111;font-family:'Liberation Sans',sans-serif;transform:translateX(-50%) scaleX(1.0);">50</div>
<div class="a" style="left:1089px;top:178px;width:341px;height:22px;background:#6060f0;"></div>
<div class="a" style="left:1430px;top:178px;width:1px;height:173px;background:#c0c0c0;"></div>
<div class="t" style="left:1259px;top:183.7px;font-size:12.5px;font-weight:bold;color:#111;font-family:'Liberation Sans',sans-serif;transform:translateX(-50%) scaleX(1.0);">75</div>
<div class="a" style="left:1431px;top:178px;width:340px;height:22px;background:#3030f0;"></div>
<div class="a" style="left:1771px;top:178px;width:1px;height:173px;background:#c8c8c8;"></div>
<div class="t" style="left:1601px;top:183.7px;font-size:12.5px;font-weight:bold;color:#111;font-family:'Liberation Sans',sans-serif;transform:translateX(-50%) scaleX(1.0);">100</div>
<div class="a" style="left:405px;top:178px;width:1px;height:23px;background:#6a6a6a;"></div>
<div class="a" style="left:10px;top:201px;width:53px;height:24px;background:#f0f0f0;"></div>
<div class="a" style="left:10px;top:225px;width:53px;height:1px;background:#6a6a6a;"></div>
<div class="a" style="left:64px;top:201px;width:1707px;height:24px;background:#fff;"></div>
<div class="a" style="left:64px;top:225px;width:1707px;height:1px;background:#c0c0c0;"></div>
<div class="a" style="left:405px;top:201px;width:1px;height:25px;background:#c0c0c0;"></div>
<div class="a" style="left:747px;top:201px;width:1px;height:25px;background:#c0c0c0;"></div>
<div class="a" style="left:1088px;top:201px;width:1px;height:25px;background:#c0c0c0;"></div>
<div class="a" style="left:1430px;top:201px;width:1px;height:25px;background:#c0c0c0;"></div>
<div class="t" style="left:37px;top:206.4px;font-size:13px;font-weight:bold;color:#000;font-family:'Liberation Sans',sans-serif;transform:translateX(-50%) scaleX(0.9);">x</div>
<div class="t" style="right:1516px;top:207.3px;font-size:12px;color:#000;font-family:'Liberation Sans',sans-serif;transform:scaleX(0.9);transform-origin:100% 0;">0.3070</div>
<div class="t" style="right:1174px;top:207.3px;font-size:12px;color:#000;font-family:'Liberation Sans',sans-serif;transform:scaleX(0.9);transform-origin:100% 0;">0.2672</div>
<div class="t" style="right:833px;top:207.3px;font-size:12px;color:#000;font-family:'Liberation Sans',sans-serif;transform:scaleX(0.9);transform-origin:100% 0;">0.2300</div>
<div class="t" style="right:491px;top:207.3px;font-size:12px;color:#000;font-family:'Liberation Sans',sans-serif;transform:scaleX(0.9);transform-origin:100% 0;">0.1903</div>
<div class="t" style="right:150px;top:207.3px;font-size:12px;color:#000;font-family:'Liberation Sans',sans-serif;transform:scaleX(0.9);transform-origin:100% 0;">0.1510</div>
<div class="a" style="left:10px;top:226px;width:53px;height:24px;background:#f0f0f0;"></div>
<div class="a" style="left:10px;top:250px;width:53px;height:1px;background:#6a6a6a;"></div>
<div class="a" style="left:64px;top:226px;width:1707px;height:24px;background:#fff;"></div>
<div class="a" style="left:64px;top:250px;width:1707px;height:1px;background:#c0c0c0;"></div>
<div class="a" style="left:405px;top:226px;width:1px;height:25px;background:#c0c0c0;"></div>
<div class="a" style="left:747px;top:226px;width:1px;height:25px;background:#c0c0c0;"></div>
<div class="a" style="left:1088px;top:226px;width:1px;height:25px;background:#c0c0c0;"></div>
<div class="a" style="left:1430px;top:226px;width:1px;height:25px;background:#c0c0c0;"></div>
<div class="t" style="left:37px;top:231.4px;font-size:13px;font-weight:bold;color:#000;font-family:'Liberation Sans',sans-serif;transform:translateX(-50%) scaleX(0.9);">y</div>
<div class="t" style="right:1516px;top:232.3px;font-size:12px;color:#000;font-family:'Liberation Sans',sans-serif;transform:scaleX(0.9);transform-origin:100% 0;">0.3285</div>
<div class="t" style="right:1174px;top:232.3px;font-size:12px;color:#000;font-family:'Liberation Sans',sans-serif;transform:scaleX(0.9);transform-origin:100% 0;">0.2607</div>
<div class="t" style="right:833px;top:232.3px;font-size:12px;color:#000;font-family:'Liberation Sans',sans-serif;transform:scaleX(0.9);transform-origin:100% 0;">0.1970</div>
<div class="t" style="right:491px;top:232.3px;font-size:12px;color:#000;font-family:'Liberation Sans',sans-serif;transform:scaleX(0.9);transform-origin:100% 0;">0.1301</div>
<div class="t" style="right:150px;top:232.3px;font-size:12px;color:#000;font-family:'Liberation Sans',sans-serif;transform:scaleX(0.9);transform-origin:100% 0;">0.0650</div>
<div class="a" style="left:10px;top:251px;width:53px;height:24px;background:#f0f0f0;"></div>
<div class="a" style="left:10px;top:275px;width:53px;height:1px;background:#6a6a6a;"></div>
<div class="a" style="left:64px;top:251px;width:1707px;height:24px;background:#fff;"></div>
<div class="a" style="left:64px;top:275px;width:1707px;height:1px;background:#c0c0c0;"></div>
<div class="a" style="left:405px;top:251px;width:1px;height:25px;background:#c0c0c0;"></div>
<div class="a" style="left:747px;top:251px;width:1px;height:25px;background:#c0c0c0;"></div>
<div class="a" style="left:1088px;top:251px;width:1px;height:25px;background:#c0c0c0;"></div>
<div class="a" style="left:1430px;top:251px;width:1px;height:25px;background:#c0c0c0;"></div>
<div class="t" style="left:37px;top:256.4px;font-size:13px;font-weight:bold;color:#000;font-family:'Liberation Sans',sans-serif;transform:translateX(-50%) scaleX(0.9);">Y</div>
<div class="t" style="right:1516px;top:257.3px;font-size:12px;color:#000;font-family:'Liberation Sans',sans-serif;transform:scaleX(0.9);transform-origin:100% 0;">20.633</div>
<div class="t" style="right:1174px;top:257.3px;font-size:12px;color:#000;font-family:'Liberation Sans',sans-serif;transform:scaleX(0.9);transform-origin:100% 0;">20.392</div>
<div class="t" style="right:833px;top:257.3px;font-size:12px;color:#000;font-family:'Liberation Sans',sans-serif;transform:scaleX(0.9);transform-origin:100% 0;">19.892</div>
<div class="t" style="right:491px;top:257.3px;font-size:12px;color:#000;font-family:'Liberation Sans',sans-serif;transform:scaleX(0.9);transform-origin:100% 0;">20.071</div>
<div class="t" style="right:150px;top:257.3px;font-size:12px;color:#000;font-family:'Liberation Sans',sans-serif;transform:scaleX(0.9);transform-origin:100% 0;">20.549</div>
<div class="a" style="left:10px;top:276px;width:53px;height:24px;background:#f0f0f0;"></div>
<div class="a" style="left:10px;top:300px;width:53px;height:1px;background:#6a6a6a;"></div>
<div class="a" style="left:64px;top:276px;width:1707px;height:24px;background:#b0fbb0;"></div>
<div class="a" style="left:64px;top:300px;width:1707px;height:1px;background:#c0c0c0;"></div>
<div class="a" style="left:405px;top:276px;width:1px;height:25px;background:#c0c0c0;"></div>
<div class="a" style="left:747px;top:276px;width:1px;height:25px;background:#c0c0c0;"></div>
<div class="a" style="left:1088px;top:276px;width:1px;height:25px;background:#c0c0c0;"></div>
<div class="a" style="left:1430px;top:276px;width:1px;height:25px;background:#c0c0c0;"></div>
<div class="t" style="left:37px;top:281.4px;font-size:13px;font-weight:bold;color:#000;font-family:'Liberation Sans',sans-serif;transform:translateX(-50%) scaleX(0.9);">Delta E</div>
<div class="t" style="right:1516px;top:282.3px;font-size:12px;font-weight:bold;color:#000;font-family:'Liberation Sans',sans-serif;">2.0</div>
<div class="t" style="right:1174px;top:282.3px;font-size:12px;font-weight:bold;color:#000;font-family:'Liberation Sans',sans-serif;">1.5</div>
<div class="t" style="right:833px;top:282.3px;font-size:12px;font-weight:bold;color:#000;font-family:'Liberation Sans',sans-serif;">0.8</div>
<div class="t" style="right:491px;top:282.3px;font-size:12px;font-weight:bold;color:#000;font-family:'Liberation Sans',sans-serif;">0.8</div>
<div class="t" style="right:150px;top:282.3px;font-size:12px;font-weight:bold;color:#000;font-family:'Liberation Sans',sans-serif;">1.6</div>
<div class="a" style="left:10px;top:301px;width:53px;height:24px;background:#f0f0f0;"></div>
<div class="a" style="left:10px;top:325px;width:53px;height:1px;background:#6a6a6a;"></div>
<div class="a" style="left:64px;top:301px;width:1707px;height:24px;background:#f0f0f0;"></div>
<div class="a" style="left:64px;top:325px;width:1707px;height:1px;background:#c0c0c0;"></div>
<div class="a" style="left:405px;top:301px;width:1px;height:25px;background:#c0c0c0;"></div>
<div class="a" style="left:747px;top:301px;width:1px;height:25px;background:#c0c0c0;"></div>
<div class="a" style="left:1088px;top:301px;width:1px;height:25px;background:#c0c0c0;"></div>
<div class="a" style="left:1430px;top:301px;width:1px;height:25px;background:#c0c0c0;"></div>
<div class="t" style="left:37px;top:306.4px;font-size:13px;font-weight:bold;color:#000;font-family:'Liberation Sans',sans-serif;transform:translateX(-50%) scaleX(0.9);">delta xy</div>
<div class="t" style="right:1516px;top:307.3px;font-size:12px;color:#000;font-family:'Liberation Sans',sans-serif;transform:scaleX(0.9);transform-origin:100% 0;">0.0057</div>
<div class="t" style="right:1174px;top:307.3px;font-size:12px;color:#000;font-family:'Liberation Sans',sans-serif;transform:scaleX(0.9);transform-origin:100% 0;">0.0045</div>
<div class="t" style="right:833px;top:307.3px;font-size:12px;color:#000;font-family:'Liberation Sans',sans-serif;transform:scaleX(0.9);transform-origin:100% 0;">0.0029</div>
<div class="t" style="right:491px;top:307.3px;font-size:12px;color:#000;font-family:'Liberation Sans',sans-serif;transform:scaleX(0.9);transform-origin:100% 0;">0.0021</div>
<div class="t" style="right:150px;top:307.3px;font-size:12px;color:#000;font-family:'Liberation Sans',sans-serif;transform:scaleX(0.9);transform-origin:100% 0;">0.0051</div>
<div class="a" style="left:10px;top:326px;width:53px;height:24px;background:#f0f0f0;"></div>
<div class="a" style="left:10px;top:350px;width:53px;height:1px;background:#6a6a6a;"></div>
<div class="a" style="left:64px;top:326px;width:1707px;height:24px;background:#e0e0e0;"></div>
<div class="a" style="left:64px;top:350px;width:1707px;height:1px;background:#c0c0c0;"></div>
<div class="a" style="left:405px;top:326px;width:1px;height:25px;background:#c0c0c0;"></div>
<div class="a" style="left:747px;top:326px;width:1px;height:25px;background:#c0c0c0;"></div>
<div class="a" style="left:1088px;top:326px;width:1px;height:25px;background:#c0c0c0;"></div>
<div class="a" style="left:1430px;top:326px;width:1px;height:25px;background:#c0c0c0;"></div>
<div class="t" style="left:37px;top:331.4px;font-size:13px;font-weight:bold;color:#000;font-family:'Liberation Sans',sans-serif;transform:translateX(-50%) scaleX(0.9);">delta L</div>
<div class="t" style="right:1516px;top:332.3px;font-size:12px;color:#000;font-family:'Liberation Sans',sans-serif;transform:scaleX(0.9);transform-origin:100% 0;">+6.3 %</div>
<div class="t" style="right:1174px;top:332.3px;font-size:12px;color:#000;font-family:'Liberation Sans',sans-serif;transform:scaleX(0.9);transform-origin:100% 0;">+5.8 %</div>
<div class="t" style="right:833px;top:332.3px;font-size:12px;color:#000;font-family:'Liberation Sans',sans-serif;transform:scaleX(0.9);transform-origin:100% 0;">+2.8 %</div>
<div class="t" style="right:491px;top:332.3px;font-size:12px;color:#000;font-family:'Liberation Sans',sans-serif;transform:scaleX(0.9);transform-origin:100% 0;">+3.9 %</div>
<div class="t" style="right:150px;top:332.3px;font-size:12px;color:#000;font-family:'Liberation Sans',sans-serif;transform:scaleX(0.9);transform-origin:100% 0;">+8.4 %</div>
<div class="a" style="left:10px;top:351px;width:53px;height:4px;background:#f0f0f0;"></div>
<div class="a" style="left:64px;top:351px;width:1707px;height:4px;background:#fbfbfb;"></div>
<div class="a" style="left:10px;top:355px;width:1779px;height:17px;background:#f0f0f0;"></div>
<svg class="a" style="left:14px;top:359px" width="8" height="10"><path d="M7 0 V9 L1 4.5 Z" fill="#a0a0a0"/></svg>
<svg class="a" style="left:1759px;top:359px" width="8" height="10"><path d="M1 0 V9 L7 4.5 Z" fill="#a0a0a0"/></svg>
<div class="a" style="left:1772px;top:178px;width:17px;height:177px;background:#f0f0f0;"></div>
<div class="a" style="left:1779px;top:195px;width:2px;height:141px;background:#8a8a8a;"></div>
<div class="a" style="left:1810px;top:160px;width:91px;height:223px;background:#888888;"></div>
<div class="a" style="left:1813px;top:162px;width:83px;height:99px;background:#ececec;border:2px solid #707070;"></div>
<div class="a" style="left:1815px;top:164px;width:79px;height:15px;background:#e4ebf6;border-radius:6px 6px 0 0;"></div>
<div class="a" style="left:1815px;top:180px;width:79px;height:1px;background:#a9a9a9;"></div>
<div class="t" style="left:1822px;top:166.8px;font-size:12px;font-weight:bold;color:#3a3a3a;font-family:'Liberation Sans',sans-serif;transform:scaleX(1.13);transform-origin:0 0;">Display</div>
<div class="a" style="left:1822px;top:179px;width:58px;height:16px;background:#efefef;"></div>
<svg class="a" style="left:1822px;top:181px" width="13" height="13"><circle cx="6.5" cy="6.5" r="5" fill="#f0f0f0" stroke="#e4e4e4" stroke-width="1"/><path d="M2.3 9.5 A5 5 0 0 1 9.5 2.3" fill="none" stroke="#909090" stroke-width="1.1" stroke-dasharray="2 0.6"/></svg>
<div class="t" style="left:1841px;top:180.9px;font-size:13px;color:#a0a0a0;font-family:'Liberation Sans',sans-serif;">Sensor</div>
<div class="a" style="left:1822px;top:195px;width:58px;height:16px;background:#efefef;"></div>
<svg class="a" style="left:1822px;top:197px" width="13" height="13"><circle cx="6.5" cy="6.5" r="5" fill="#fff" stroke="#e4e4e4" stroke-width="1"/><path d="M2.3 9.5 A5 5 0 0 1 9.5 2.3" fill="none" stroke="#5a5a5a" stroke-width="1.1" stroke-dasharray="2 0.6"/></svg>
<div class="t" style="left:1841px;top:196.9px;font-size:13px;color:#000;font-family:'Liberation Sans',sans-serif;">RGB</div>
<div class="a" style="left:1822px;top:211px;width:58px;height:16px;background:#efefef;"></div>
<svg class="a" style="left:1822px;top:213px" width="13" height="13"><circle cx="6.5" cy="6.5" r="5" fill="#fff" stroke="#e4e4e4" stroke-width="1"/><path d="M2.3 9.5 A5 5 0 0 1 9.5 2.3" fill="none" stroke="#5a5a5a" stroke-width="1.1" stroke-dasharray="2 0.6"/></svg>
<div class="t" style="left:1841px;top:212.9px;font-size:13px;color:#000;font-family:'Liberation Sans',sans-serif;">XYZ</div>
<div class="a" style="left:1822px;top:227px;width:58px;height:16px;background:#efefef;"></div>
<svg class="a" style="left:1822px;top:229px" width="13" height="13"><circle cx="6.5" cy="6.5" r="5" fill="#fff" stroke="#e4e4e4" stroke-width="1"/><path d="M2.3 9.5 A5 5 0 0 1 9.5 2.3" fill="none" stroke="#5a5a5a" stroke-width="1.1" stroke-dasharray="2 0.6"/></svg>
<div class="t" style="left:1841px;top:228.9px;font-size:13px;color:#000;font-family:'Liberation Sans',sans-serif;">xyz</div>
<div class="a" style="left:1822px;top:242.5px;width:58px;height:16px;background:#efefef;"></div>
<svg class="a" style="left:1822px;top:244.5px" width="13" height="13"><circle cx="6.5" cy="6.5" r="5" fill="#fff" stroke="#e4e4e4" stroke-width="1"/><path d="M2.3 9.5 A5 5 0 0 1 9.5 2.3" fill="none" stroke="#5a5a5a" stroke-width="1.1" stroke-dasharray="2 0.6"/><circle cx="6.5" cy="6.5" r="2" fill="#000"/></svg>
<div class="t" style="left:1841px;top:244.4px;font-size:13px;color:#000;font-family:'Liberation Sans',sans-serif;">xyY</div>
<div class="a" style="left:1812px;top:264px;width:84px;height:92px;background:#a0a0a0;"></div>
<div class="a" style="left:1812px;top:265px;width:83px;height:30px;background:#ececec;border-top:1px solid #fff;border-left:1px solid #fff;border-right:2px solid #a8a8a8;border-bottom:1px solid #d8d8d8;"></div>
<div class="a" style="left:1812px;top:295px;width:83px;height:30px;background:#ececec;border-top:1px solid #fff;border-left:1px solid #fff;border-right:2px solid #a8a8a8;border-bottom:1px solid #d8d8d8;"></div>
<div class="a" style="left:1812px;top:324px;width:83px;height:30px;background:#ececec;border-top:1px solid #fff;border-left:1px solid #fff;border-right:2px solid #a8a8a8;border-bottom:1px solid #d8d8d8;"></div>
<div class="a" style="left:1812px;top:354px;width:84px;height:2px;background:#707070;"></div>
<div class="t" style="left:1863px;top:274.9px;font-size:13px;color:#000;font-family:'Liberation Sans',sans-serif;">Go</div>
<div class="t" style="left:1851px;top:304.4px;font-size:13px;color:#000;font-family:'Liberation Sans',sans-serif;transform:scaleX(1.1);transform-origin:0 0;">Delete</div>
<div class="t" style="left:1858px;top:333.9px;font-size:13px;color:#000;font-family:'Liberation Sans',sans-serif;transform:scaleX(1.05);transform-origin:0 0;">Refs</div>
<svg class="a" style="left:1818px;top:266px" width="32" height="28" viewBox="0 0 32 28"><path d="M1 1 H9 Q12 10 9 27 H1 Z" fill="#b0b0b0" stroke="#202020" stroke-width="1"/><path d="M23 4 H31 V27 H22 Q25 15 23 4Z" fill="#b0b0b0" stroke="#202020" stroke-width="1"/><g fill="#e8e8e8" stroke="#404040" stroke-width="0.6"><rect x="3" y="5" width="4" height="3"/><rect x="3" y="12" width="4" height="3"/><rect x="3" y="19" width="4" height="3"/><rect x="25" y="8" width="4" height="3"/><rect x="25" y="15" width="4" height="3"/><rect x="25" y="22" width="4" height="3"/></g><path d="M6 1 Q14 -1 18 3 Q24 10 22 16 Q21 23 28 27 L14 27 Q8 22 10 16 Q12 8 6 1Z" fill="#1830c0" stroke="#0a0a40" stroke-width="1"/><path d="M9 4 L16 3 L17 10 L11 11Z M12 14 L19 13 L21 20 L14 22Z" fill="#50a8ff"/><path d="M16 22 L22 20 L24 25 L18 26Z" fill="#80c8ff"/></svg>
<svg class="a" style="left:1819px;top:296px" width="29" height="28" viewBox="0 0 29 28"><defs><linearGradient id="bin" x1="0" x2="1" y1="0" y2="0"><stop offset="0" stop-color="#d8f0ff"/><stop offset="0.6" stop-color="#90c8f0"/><stop offset="1" stop-color="#4a90d0"/></linearGradient></defs><path d="M1 5 Q14 -1 28 2 L24 24 Q14 29 6 25 Z" fill="url(#bin)" stroke="#5a98c8" stroke-width="0.8"/><ellipse cx="15" cy="23" rx="8" ry="3" fill="#b8e0f8" opacity="0.8"/><path d="M13 16 Q12 10 18 9 L18 7 L22 11 L18 14 L18 12 Q15 12 15 16Z" fill="#10a020"/><path d="M23 14 Q24 20 18 21 L18 23 L14 19 L18 16 L18 18 Q21 18 21 14Z" fill="#10a020"/></svg>
<svg class="a" style="left:1818px;top:328px" width="33" height="24" viewBox="0 0 33 24" shape-rendering="crispEdges"><path d="M0 23 V11 L3 8 L5 3 L7 6 L9 8 L12 9 L14 6 L16 4 L18 1 L21 5 L23 8 L25 9 L27 8 L30 9 V23Z" fill="#ffff00"/><rect x="1" y="12" width="2" height="11" fill="#000080"/><rect x="3" y="10" width="2" height="13" fill="#ff00ff"/><rect x="5" y="5" width="4" height="18" fill="#0000ff"/><rect x="9" y="9" width="3" height="14" fill="#00ffff"/><rect x="12" y="10" width="4" height="13" fill="#00ff00"/><rect x="16" y="3" width="5" height="20" fill="#ffff00"/><rect x="21" y="6" width="3" height="17" fill="#800000"/><rect x="24" y="10" width="6" height="13" fill="#ff0000"/></svg>
<div class="a" style="left:1818px;top:358px;width:56px;height:18px;background:#efefef;"></div>
<div class="a" style="left:1819px;top:360px;width:12px;height:12px;background:#fff;border-top:2px solid #7a7a7a;border-left:2px solid #7a7a7a;border-bottom:1px solid #e8e8e8;border-right:1px solid #e8e8e8;"></div>
<div class="t" style="left:1837px;top:361.4px;font-size:13px;color:#000;font-family:'Liberation Sans',sans-serif;transform:scaleX(1.05);transform-origin:0 0;">Edit</div>
<div class="a" style="left:2px;top:379px;width:1899px;height:5px;background:#7d7d7d;"></div>
<div class="a" style="left:2px;top:384px;width:1899px;height:2px;background:#fafafa;"></div>
<div class="a" style="left:2px;top:386px;width:1899px;height:634px;background:#f4f4f4;"></div>
<div class="a" style="left:5px;top:387px;width:379px;height:631px;background:#ececec;border-top:1px solid #707070;border-left:2px solid #a0a0a0;"></div>
<div class="a" style="left:381px;top:388px;width:1px;height:626px;background:#909090;"></div>
<div class="a" style="left:382px;top:388px;width:1px;height:630px;background:#6a6a6a;"></div>
<div class="a" style="left:7px;top:1014px;width:375px;height:2px;background:#a0a0a0;"></div>
<div class="a" style="left:5px;top:1016px;width:379px;height:1px;background:#fff;"></div>
<div class="a" style="left:2px;top:1017px;width:384px;height:2px;background:#6e6e6e;"></div>
<div class="a" style="left:2px;top:1019px;width:384px;height:3px;background:#b8b8b8;"></div>
<div class="a" style="left:7px;top:388px;width:374px;height:17px;background:#e4ebf6;border-radius:7px 7px 0 0;"></div>
<div class="a" style="left:7px;top:405px;width:375px;height:1px;background:#b0b0b0;"></div>
<div class="t" style="left:12px;top:390.8px;font-size:12px;font-weight:bold;color:#3a3a3a;font-family:'Liberation Sans',sans-serif;transform:scaleX(1.13);transform-origin:0 0;">Selected color</div>
<div class="a" style="left:15px;top:409px;width:112px;height:14px;background:#f0f0f0;"></div>
<div class="t" style="left:18px;top:409.9px;font-size:13px;color:#111;font-family:'Liberation Sans',sans-serif;transform:scaleX(0.99);transform-origin:0 0;">RGB Levels</div>
<div class="a" style="left:230px;top:407px;width:128px;height:14px;background:#f0f0f0;"></div>
<div class="t" style="left:242px;top:407.8px;font-size:13px;color:#111;font-family:'Liberation Sans',sans-serif;transform:scaleX(1.06);transform-origin:0 0;">Current Measure</div>
<div class="a" style="left:14px;top:433px;width:200px;height:100px;background:#f0f0f0;"></div>
<svg class="a" style="left:14px;top:476px" width="200" height="3"><line x1="0" y1="1.5" x2="200" y2="1.5" stroke="#909090" stroke-width="1" stroke-dasharray="3 3"/></svg>
<div class="t" style="left:26px;top:495.2px;font-size:12px;font-weight:bold;color:#000;font-family:'Liberation Serif',serif;transform:scaleX(0.95);transform-origin:0 0;">0.0%</div>
<div class="t" style="left:77px;top:495.2px;font-size:12px;font-weight:bold;color:#000;font-family:'Liberation Serif',serif;transform:scaleX(0.95);transform-origin:0 0;">0.0%</div>
<div class="t" style="left:128px;top:495.2px;font-size:12px;font-weight:bold;color:#000;font-family:'Liberation Serif',serif;transform:scaleX(0.95);transform-origin:0 0;">0.0%</div>
<div class="t" style="left:175px;top:495.2px;font-size:12px;font-weight:bold;color:#000;font-family:'Liberation Serif',serif;transform:scaleX(0.95);transform-origin:0 0;">dE 0.0</div>
<svg class="a" style="left:0;top:507px" width="214" height="12" viewBox="0 0 214 12" shape-rendering="crispEdges"><path d="M14 7 A25.5 6 0 0 1 65 7 Z" fill="#000"/><path d="M17.5 7 A22 4.8 0 0 1 61.5 7 Z" fill="#a00000"/><path d="M65 7 A25.5 6 0 0 1 116 7 Z" fill="#000"/><path d="M68.5 7 A22 4.8 0 0 1 112.5 7 Z" fill="#00a000"/><path d="M116 7 A25.5 6 0 0 1 167 7 Z" fill="#000"/><path d="M119.5 7 A22 4.8 0 0 1 163.5 7 Z" fill="#0000a0"/><path d="M167 7 A25.5 6 0 0 1 218 7 Z" fill="#000"/><path d="M170.5 7 A22 4.8 0 0 1 214.5 7 Z" fill="#c08010"/><rect x="14" y="6.5" width="200" height="5" fill="#000"/></svg>
<div class="a" style="left:16px;top:533px;width:192px;height:73px;background:#f0f0f0;"></div>
<div class="t" style="left:35px;top:534.5px;font-size:13px;font-weight:bold;color:#000;font-family:'Liberation Sans',sans-serif;transform:scaleX(1.08);transform-origin:0 0;">Measure</div>
<div class="t" style="left:128px;top:534.5px;font-size:13px;font-weight:bold;color:#000;font-family:'Liberation Sans',sans-serif;transform:scaleX(1.03);transform-origin:0 0;">Reference</div>
<div class="a" style="left:15px;top:622px;width:45px;height:14px;background:#f0f0f0;"></div>
<div class="t" style="left:18px;top:623.0px;font-size:13px;color:#111;font-family:'Liberation Sans',sans-serif;transform:scaleX(1.06);transform-origin:0 0;">Target</div>
<div class="a" style="left:50px;top:638px;width:116px;height:89px;border:1px solid #000;background:conic-gradient(from 0deg at 50% 50%,#40ff00,#ffc800 45deg,#ff0000 90deg,#ff0090 135deg,#8000c8 180deg,#0000ff 225deg,#0080a0 270deg,#00ff80 315deg,#40ff00 360deg)"></div>
<svg class="a" style="left:50px;top:638px" width="116" height="89" viewBox="0 0 116 89"><rect x="17.5" y="13.5" width="81" height="62" rx="8" fill="#000" stroke="#fff" stroke-width="1"/><g stroke="#fff" stroke-width="1" stroke-dasharray="3 3" fill="none"><line x1="58.5" y1="13" x2="58.5" y2="76"/><line x1="15" y1="44.5" x2="102" y2="44.5"/><ellipse cx="58.5" cy="44.5" rx="20" ry="15"/></g></svg>
<div class="a" style="left:221px;top:431px;width:152px;height:578px;background:#f0f0f0;border-top:2px solid #6d6d6d;border-left:2px solid #6d6d6d;"></div>
<div class="a" style="left:223px;top:432px;width:54px;height:22px;background:#f0f0f0;"></div>
<div class="a" style="left:223px;top:454px;width:54px;height:1px;background:#6a6a6a;"></div>
<div class="a" style="left:278px;top:432px;width:76px;height:22px;background:#ffffff;"></div>
<div class="a" style="left:278px;top:454px;width:76px;height:1px;background:#c0c0c0;"></div>
<div class="t" style="left:250px;top:436.9px;font-size:13px;font-weight:bold;color:#000;font-family:'Liberation Sans',sans-serif;transform:translateX(-50%) scaleX(0.9);">Y cd/m<sup style='font-size:8px;vertical-align:5px'>2</sup></div>
<div class="a" style="left:223px;top:455px;width:54px;height:22px;background:#f0f0f0;"></div>
<div class="a" style="left:223px;top:477px;width:54px;height:1px;background:#6a6a6a;"></div>
<div class="a" style="left:278px;top:455px;width:76px;height:22px;background:#ffffff;"></div>
<div class="a" style="left:278px;top:477px;width:76px;height:1px;background:#c0c0c0;"></div>
<div class="t" style="left:250px;top:459.9px;font-size:13px;font-weight:bold;color:#000;font-family:'Liberation Sans',sans-serif;transform:translateX(-50%) scaleX(0.9);">Y ftL</div>
<div class="a" style="left:223px;top:478px;width:54px;height:22px;background:#f0f0f0;"></div>
<div class="a" style="left:223px;top:500px;width:54px;height:1px;background:#6a6a6a;"></div>
<div class="a" style="left:278px;top:478px;width:76px;height:22px;background:#ffffff;"></div>
<div class="a" style="left:278px;top:500px;width:76px;height:1px;background:#c0c0c0;"></div>
<div class="t" style="left:250px;top:482.9px;font-size:13px;font-weight:bold;color:#000;font-family:'Liberation Sans',sans-serif;transform:translateX(-50%) scaleX(0.9);">T°</div>
<div class="a" style="left:223px;top:501px;width:54px;height:22px;background:#f0f0f0;"></div>
<div class="a" style="left:223px;top:523px;width:54px;height:1px;background:#6a6a6a;"></div>
<div class="a" style="left:278px;top:501px;width:76px;height:22px;background:#e0e0e0;"></div>
<div class="a" style="left:278px;top:523px;width:76px;height:1px;background:#c0c0c0;"></div>
<div class="t" style="left:250px;top:505.9px;font-size:13px;font-weight:bold;color:#000;font-family:'Liberation Sans',sans-serif;transform:translateX(-50%) scaleX(0.9);">X</div>
<div class="a" style="left:223px;top:524px;width:54px;height:22px;background:#f0f0f0;"></div>
<div class="a" style="left:223px;top:546px;width:54px;height:1px;background:#6a6a6a;"></div>
<div class="a" style="left:278px;top:524px;width:76px;height:22px;background:#e0e0e0;"></div>
<div class="a" style="left:278px;top:546px;width:76px;height:1px;background:#c0c0c0;"></div>
<div class="t" style="left:250px;top:529.0px;font-size:13px;font-weight:bold;color:#000;font-family:'Liberation Sans',sans-serif;transform:translateX(-50%) scaleX(0.9);">Y</div>
<div class="a" style="left:223px;top:547px;width:54px;height:22px;background:#f0f0f0;"></div>
<div class="a" style="left:223px;top:569px;width:54px;height:1px;background:#6a6a6a;"></div>
<div class="a" style="left:278px;top:547px;width:76px;height:22px;background:#e0e0e0;"></div>
<div class="a" style="left:278px;top:569px;width:76px;height:1px;background:#c0c0c0;"></div>
<div class="t" style="left:250px;top:552.0px;font-size:13px;font-weight:bold;color:#000;font-family:'Liberation Sans',sans-serif;transform:translateX(-50%) scaleX(0.9);">Z</div>
<div class="a" style="left:223px;top:570px;width:54px;height:22px;background:#f0f0f0;"></div>
<div class="a" style="left:223px;top:592px;width:54px;height:1px;background:#6a6a6a;"></div>
<div class="a" style="left:278px;top:570px;width:76px;height:22px;background:#ffffff;"></div>
<div class="a" style="left:278px;top:592px;width:76px;height:1px;background:#c0c0c0;"></div>
<div class="t" style="left:250px;top:575.0px;font-size:13px;font-weight:bold;color:#000;font-family:'Liberation Sans',sans-serif;transform:translateX(-50%) scaleX(0.9);">R</div>
<div class="a" style="left:223px;top:593px;width:54px;height:22px;background:#f0f0f0;"></div>
<div class="a" style="left:223px;top:615px;width:54px;height:1px;background:#6a6a6a;"></div>
<div class="a" style="left:278px;top:593px;width:76px;height:22px;background:#ffffff;"></div>
<div class="a" style="left:278px;top:615px;width:76px;height:1px;background:#c0c0c0;"></div>
<div class="t" style="left:250px;top:598.0px;font-size:13px;font-weight:bold;color:#000;font-family:'Liberation Sans',sans-serif;transform:translateX(-50%) scaleX(0.9);">G</div>
<div class="a" style="left:223px;top:616px;width:54px;height:22px;background:#f0f0f0;"></div>
<div class="a" style="left:223px;top:638px;width:54px;height:1px;background:#6a6a6a;"></div>
<div class="a" style="left:278px;top:616px;width:76px;height:22px;background:#ffffff;"></div>
<div class="a" style="left:278px;top:638px;width:76px;height:1px;background:#c0c0c0;"></div>
<div class="t" style="left:250px;top:621.0px;font-size:13px;font-weight:bold;color:#000;font-family:'Liberation Sans',sans-serif;transform:translateX(-50%) scaleX(0.9);">B</div>
<div class="a" style="left:223px;top:639px;width:54px;height:22px;background:#f0f0f0;"></div>
<div class="a" style="left:223px;top:661px;width:54px;height:1px;background:#6a6a6a;"></div>
<div class="a" style="left:278px;top:639px;width:76px;height:22px;background:#e0e0e0;"></div>
<div class="a" style="left:278px;top:661px;width:76px;height:1px;background:#c0c0c0;"></div>
<div class="t" style="left:250px;top:644.0px;font-size:13px;font-weight:bold;color:#000;font-family:'Liberation Sans',sans-serif;transform:translateX(-50%) scaleX(0.9);">x</div>
<div class="a" style="left:223px;top:662px;width:54px;height:22px;background:#f0f0f0;"></div>
<div class="a" style="left:223px;top:684px;width:54px;height:1px;background:#6a6a6a;"></div>
<div class="a" style="left:278px;top:662px;width:76px;height:22px;background:#e0e0e0;"></div>
<div class="a" style="left:278px;top:684px;width:76px;height:1px;background:#c0c0c0;"></div>
<div class="t" style="left:250px;top:667.0px;font-size:13px;font-weight:bold;color:#000;font-family:'Liberation Sans',sans-serif;transform:translateX(-50%) scaleX(0.9);">y</div>
<div class="a" style="left:223px;top:685px;width:54px;height:22px;background:#f0f0f0;"></div>
<div class="a" style="left:223px;top:707px;width:54px;height:1px;background:#6a6a6a;"></div>
<div class="a" style="left:278px;top:685px;width:76px;height:22px;background:#e0e0e0;"></div>
<div class="a" style="left:278px;top:707px;width:76px;height:1px;background:#c0c0c0;"></div>
<div class="t" style="left:250px;top:690.0px;font-size:13px;font-weight:bold;color:#000;font-family:'Liberation Sans',sans-serif;transform:translateX(-50%) scaleX(0.9);">Y</div>
<div class="a" style="left:223px;top:708px;width:54px;height:22px;background:#f0f0f0;"></div>
<div class="a" style="left:223px;top:730px;width:54px;height:1px;background:#6a6a6a;"></div>
<div class="a" style="left:278px;top:708px;width:76px;height:22px;background:#ffffff;"></div>
<div class="a" style="left:278px;top:730px;width:76px;height:1px;background:#c0c0c0;"></div>
<div class="t" style="left:250px;top:713.0px;font-size:13px;font-weight:bold;color:#000;font-family:'Liberation Sans',sans-serif;transform:translateX(-50%) scaleX(0.9);">x</div>
<div class="a" style="left:223px;top:731px;width:54px;height:22px;background:#f0f0f0;"></div>
<div class="a" style="left:223px;top:753px;width:54px;height:1px;background:#6a6a6a;"></div>
<div class="a" style="left:278px;top:731px;width:76px;height:22px;background:#ffffff;"></div>
<div class="a" style="left:278px;top:753px;width:76px;height:1px;background:#c0c0c0;"></div>
<div class="t" style="left:250px;top:736.0px;font-size:13px;font-weight:bold;color:#000;font-family:'Liberation Sans',sans-serif;transform:translateX(-50%) scaleX(0.9);">y</div>
<div class="a" style="left:223px;top:754px;width:54px;height:22px;background:#f0f0f0;"></div>
<div class="a" style="left:223px;top:776px;width:54px;height:1px;background:#6a6a6a;"></div>
<div class="a" style="left:278px;top:754px;width:76px;height:22px;background:#ffffff;"></div>
<div class="a" style="left:278px;top:776px;width:76px;height:1px;background:#c0c0c0;"></div>
<div class="t" style="left:250px;top:759.0px;font-size:13px;font-weight:bold;color:#000;font-family:'Liberation Sans',sans-serif;transform:translateX(-50%) scaleX(0.9);">z</div>
<div class="a" style="left:223px;top:777px;width:54px;height:22px;background:#f0f0f0;"></div>
<div class="a" style="left:223px;top:799px;width:54px;height:1px;background:#6a6a6a;"></div>
<div class="a" style="left:278px;top:777px;width:76px;height:22px;background:#e0e0e0;"></div>
<div class="a" style="left:278px;top:799px;width:76px;height:1px;background:#c0c0c0;"></div>
<div class="t" style="left:250px;top:782.0px;font-size:13px;font-weight:bold;color:#000;font-family:'Liberation Sans',sans-serif;transform:translateX(-50%) scaleX(0.9);">L</div>
<div class="a" style="left:223px;top:800px;width:54px;height:22px;background:#f0f0f0;"></div>
<div class="a" style="left:223px;top:822px;width:54px;height:1px;background:#6a6a6a;"></div>
<div class="a" style="left:278px;top:800px;width:76px;height:22px;background:#e0e0e0;"></div>
<div class="a" style="left:278px;top:822px;width:76px;height:1px;background:#c0c0c0;"></div>
<div class="t" style="left:250px;top:805.0px;font-size:13px;font-weight:bold;color:#000;font-family:'Liberation Sans',sans-serif;transform:translateX(-50%) scaleX(0.9);">a</div>
<div class="a" style="left:223px;top:823px;width:54px;height:22px;background:#f0f0f0;"></div>
<div class="a" style="left:223px;top:845px;width:54px;height:1px;background:#6a6a6a;"></div>
<div class="a" style="left:278px;top:823px;width:76px;height:22px;background:#e0e0e0;"></div>
<div class="a" style="left:278px;top:845px;width:76px;height:1px;background:#c0c0c0;"></div>
<div class="t" style="left:250px;top:828.0px;font-size:13px;font-weight:bold;color:#000;font-family:'Liberation Sans',sans-serif;transform:translateX(-50%) scaleX(0.9);">b</div>
<div class="a" style="left:223px;top:846px;width:54px;height:22px;background:#f0f0f0;"></div>
<div class="a" style="left:223px;top:868px;width:54px;height:1px;background:#6a6a6a;"></div>
<div class="a" style="left:278px;top:846px;width:76px;height:22px;background:#ffffff;"></div>
<div class="a" style="left:278px;top:868px;width:76px;height:1px;background:#c0c0c0;"></div>
<div class="t" style="left:250px;top:851.0px;font-size:13px;font-weight:bold;color:#000;font-family:'Liberation Sans',sans-serif;transform:translateX(-50%) scaleX(0.9);">L</div>
<div class="a" style="left:223px;top:869px;width:54px;height:22px;background:#f0f0f0;"></div>
<div class="a" style="left:223px;top:891px;width:54px;height:1px;background:#6a6a6a;"></div>
<div class="a" style="left:278px;top:869px;width:76px;height:22px;background:#ffffff;"></div>
<div class="a" style="left:278px;top:891px;width:76px;height:1px;background:#c0c0c0;"></div>
<div class="t" style="left:250px;top:874.0px;font-size:13px;font-weight:bold;color:#000;font-family:'Liberation Sans',sans-serif;transform:translateX(-50%) scaleX(0.9);">C</div>
<div class="a" style="left:223px;top:892px;width:54px;height:22px;background:#f0f0f0;"></div>
<div class="a" style="left:223px;top:914px;width:54px;height:1px;background:#6a6a6a;"></div>
<div class="a" style="left:278px;top:892px;width:76px;height:22px;background:#ffffff;"></div>
<div class="a" style="left:278px;top:914px;width:76px;height:1px;background:#c0c0c0;"></div>
<div class="t" style="left:250px;top:897.0px;font-size:13px;font-weight:bold;color:#000;font-family:'Liberation Sans',sans-serif;transform:translateX(-50%) scaleX(0.9);">H</div>
<div class="a" style="left:223px;top:915px;width:54px;height:22px;background:#f0f0f0;"></div>
<div class="a" style="left:223px;top:937px;width:54px;height:1px;background:#6a6a6a;"></div>
<div class="a" style="left:278px;top:915px;width:76px;height:22px;background:#e0e0e0;"></div>
<div class="a" style="left:278px;top:937px;width:76px;height:1px;background:#c0c0c0;"></div>
<div class="t" style="left:250px;top:920.0px;font-size:13px;font-weight:bold;color:#000;font-family:'Liberation Sans',sans-serif;transform:translateX(-50%) scaleX(0.9);">L</div>
<div class="a" style="left:223px;top:938px;width:54px;height:22px;background:#f0f0f0;"></div>
<div class="a" style="left:223px;top:960px;width:54px;height:1px;background:#6a6a6a;"></div>
<div class="a" style="left:278px;top:938px;width:76px;height:22px;background:#e0e0e0;"></div>
<div class="a" style="left:278px;top:960px;width:76px;height:1px;background:#c0c0c0;"></div>
<div class="t" style="left:250px;top:943.0px;font-size:13px;font-weight:bold;color:#000;font-family:'Liberation Sans',sans-serif;transform:translateX(-50%) scaleX(0.9);">M</div>
<div class="a" style="left:223px;top:961px;width:54px;height:22px;background:#f0f0f0;"></div>
<div class="a" style="left:223px;top:983px;width:54px;height:1px;background:#6a6a6a;"></div>
<div class="a" style="left:278px;top:961px;width:76px;height:22px;background:#e0e0e0;"></div>
<div class="a" style="left:278px;top:983px;width:76px;height:1px;background:#c0c0c0;"></div>
<div class="t" style="left:250px;top:966.0px;font-size:13px;font-weight:bold;color:#000;font-family:'Liberation Sans',sans-serif;transform:translateX(-50%) scaleX(0.9);">S</div>
<div class="a" style="left:277px;top:432px;width:1px;height:552px;background:#6a6a6a;"></div>
<div class="a" style="left:223px;top:984px;width:131px;height:23px;background:#a0a0a0;"></div>
<div class="a" style="left:354px;top:432px;width:1px;height:552px;background:#c8c8c8;"></div>
<svg class="a" style="left:359px;top:437px" width="10" height="8"><path d="M0 7 L5 1 L10 7 Z" fill="#a8a8a8"/></svg>
<svg class="a" style="left:359px;top:995px" width="10" height="8"><path d="M0 1 L5 7 L10 1 Z" fill="#a8a8a8"/></svg>
<div class="a" style="left:355px;top:1007px;width:18px;height:2px;background:#fafafa;"></div>
<div class="a" style="left:383px;top:386px;width:2px;height:636px;background:#fafafa;"></div>
<div class="a" style="left:385px;top:386px;width:2px;height:636px;background:#6d6d6d;"></div>
<div class="a" style="left:387px;top:386px;width:1px;height:636px;background:#a0a0a0;"></div>
<div class="a" style="left:388px;top:386px;width:3px;height:636px;background:#fafafa;"></div>
<div class="a" style="left:391px;top:387px;width:1510px;height:634px;background:#ececec;border-top:1px solid #707070;border-left:2px solid #707070;"></div>
<div class="a" style="left:1893px;top:388px;width:2px;height:626px;background:#707070;"></div>
<div class="a" style="left:1895px;top:388px;width:1px;height:628px;background:#fff;"></div>
<div class="a" style="left:1896px;top:384px;width:5px;height:637px;background:#808080;"></div>
<div class="a" style="left:393px;top:1014px;width:1500px;height:2px;background:#a0a0a0;"></div>
<div class="a" style="left:391px;top:1016px;width:1505px;height:1px;background:#fff;"></div>
<div class="a" style="left:391px;top:1017px;width:1510px;height:2px;background:#6e6e6e;"></div>
<div class="a" style="left:391px;top:1019px;width:1510px;height:3px;background:#b8b8b8;"></div>
<div class="a" style="left:393px;top:388px;width:1500px;height:17px;background:#e4ebf6;border-radius:7px 7px 0 0;"></div>
<div class="a" style="left:393px;top:405px;width:1500px;height:1px;background:#b0b0b0;"></div>
<div class="t" style="left:398px;top:390.8px;font-size:12px;font-weight:bold;color:#3a3a3a;font-family:'Liberation Sans',sans-serif;transform:scaleX(1.18);transform-origin:0 0;">Information</div>
<div class="a" style="left:397px;top:409px;width:300px;height:22px;background:#fff;border-top:2px solid #7a7a7a;border-left:2px solid #7a7a7a;border-right:1px solid #d0d0d0;border-bottom:1px solid #f8f8f8;"></div>
<div class="a" style="left:400px;top:413px;width:279px;height:16px;background:#0078d7;"></div>
<div class="t" style="left:401px;top:414.4px;font-size:13px;color:#fff;font-family:'Liberation Sans',sans-serif;">RGB Levels</div>
<div class="a" style="left:679px;top:412px;width:17px;height:18px;background:#f0f0f0;border-right:2px solid #6a6a6a;border-bottom:2px solid #6a6a6a;border-top:1px solid #fff;border-left:1px solid #fff;"></div>
<svg class="a" style="left:683px;top:418px" width="9" height="6"><path d="M0 0 H8 L4 5 Z" fill="#000"/></svg>
<div class="a" style="left:398px;top:439px;width:1497px;height:571px;background:#ececec;border-top:1px solid #6d6d6d;border-left:1px solid #6d6d6d;border-right:1px solid #fff;border-bottom:2px solid #fff;"></div>
<div class="a" style="left:399px;top:440px;width:1494px;height:3px;background:#a0a0a0;"></div>
<div class="a" style="left:399px;top:440px;width:3px;height:566px;background:#a0a0a0;"></div>
<div class="a" style="left:1891px;top:440px;width:2px;height:566px;background:#f8f8f8;"></div>
<svg class="a" style="left:402px;top:443px" width="1488" height="562" viewBox="402 443 1488 562" shape-rendering="crispEdges"><defs><linearGradient id="bg" x1="0" x2="1" y1="0" y2="0"><stop offset="0" stop-color="#1e1e1e"/><stop offset="1" stop-color="#fcfcfc"/></linearGradient><clipPath id="cp"><rect x="402" y="443" width="1488" height="562"/></clipPath></defs><rect x="402" y="443" width="1488" height="562" fill="url(#bg)"/><g fill="#034040"><rect x="402" y="443" width="1" height="562"/><rect x="550" y="443" width="1" height="562"/><rect x="699" y="443" width="1" height="562"/><rect x="848" y="443" width="1" height="562"/><rect x="997" y="443" width="1" height="562"/><rect x="1146" y="443" width="1" height="562"/><rect x="1295" y="443" width="1" height="562"/><rect x="1443" y="443" width="1" height="562"/><rect x="1592" y="443" width="1" height="562"/><rect x="1741" y="443" width="1" height="562"/><rect x="402" y="471" width="1488" height="1"/><rect x="402" y="499" width="1488" height="1"/><rect x="402" y="527" width="1488" height="1"/><rect x="402" y="555" width="1488" height="1"/><rect x="402" y="583" width="1488" height="1"/><rect x="402" y="611" width="1488" height="1"/><rect x="402" y="639" width="1488" height="1"/><rect x="402" y="667" width="1488" height="1"/><rect x="402" y="695" width="1488" height="1"/><rect x="402" y="780" width="1488" height="1"/><rect x="402" y="836" width="1488" height="1"/><rect x="402" y="892" width="1488" height="1"/><rect x="402" y="948" width="1488" height="1"/></g><line x1="404" y1="583.5" x2="1890" y2="583.5" stroke="#fff" stroke-width="1" stroke-dasharray="4 3"/><rect x="403" y="579" width="3" height="8" fill="#fff"/><text x="405" y="467" font-family="Liberation Serif" font-size="13.5" fill="#e0e0e0">140%</text><text x="405" y="495" font-family="Liberation Serif" font-size="13.5" fill="#e0e0e0">130%</text><text x="405" y="523" font-family="Liberation Serif" font-size="13.5" fill="#e0e0e0">120%</text><text x="405" y="551" font-family="Liberation Serif" font-size="13.5" fill="#e0e0e0">110%</text><text x="405" y="579" font-family="Liberation Serif" font-size="13.5" fill="#e0e0e0">100%</text><text x="405" y="607" font-family="Liberation Serif" font-size="13.5" fill="#e0e0e0">90%</text><text x="405" y="635" font-family="Liberation Serif" font-size="13.5" fill="#e0e0e0">80%</text><text x="405" y="663" font-family="Liberation Serif" font-size="13.5" fill="#e0e0e0">70%</text><text x="405" y="691" font-family="Liberation Serif" font-size="13.5" fill="#e0e0e0">60%</text><text x="404" y="776" font-family="Liberation Serif" font-size="13.5" fill="#e0e0e0">8</text><text x="404" y="832" font-family="Liberation Serif" font-size="13.5" fill="#e0e0e0">6</text><text x="404" y="888" font-family="Liberation Serif" font-size="13.5" fill="#e0e0e0">4</text><text x="404" y="944" font-family="Liberation Serif" font-size="13.5" fill="#e0e0e0">2</text><text x="553" y="720" font-family="Liberation Serif" font-size="13.5" fill="#e8e8e8">10% White</text><text x="553" y="1001" font-family="Liberation Serif" font-size="13.5" fill="#e8e8e8">10% White</text><text x="702" y="720" font-family="Liberation Serif" font-size="13.5" fill="#e0e0e0">20% White</text><text x="702" y="1001" font-family="Liberation Serif" font-size="13.5" fill="#e0e0e0">20% White</text><text x="851" y="720" font-family="Liberation Serif" font-size="13.5" fill="#b4b4b4">30% White</text><text x="851" y="1001" font-family="Liberation Serif" font-size="13.5" fill="#b4b4b4">30% White</text><text x="1000" y="720" font-family="Liberation Serif" font-size="13.5" fill="#8c8c8c">40% White</text><text x="1000" y="1001" font-family="Liberation Serif" font-size="13.5" fill="#8c8c8c">40% White</text><text x="1149" y="720" font-family="Liberation Serif" font-size="13.5" fill="#a8a8a8">50% White</text><text x="1149" y="1001" font-family="Liberation Serif" font-size="13.5" fill="#a8a8a8">50% White</text><text x="1298" y="720" font-family="Liberation Serif" font-size="13.5" fill="#505050">60% White</text><text x="1298" y="1001" font-family="Liberation Serif" font-size="13.5" fill="#505050">60% White</text><text x="1446" y="720" font-family="Liberation Serif" font-size="13.5" fill="#404040">70% White</text><text x="1446" y="1001" font-family="Liberation Serif" font-size="13.5" fill="#404040">70% White</text><text x="1595" y="720" font-family="Liberation Serif" font-size="13.5" fill="#303030">80% White</text><text x="1595" y="1001" font-family="Liberation Serif" font-size="13.5" fill="#303030">80% White</text><text x="1744" y="720" font-family="Liberation Serif" font-size="13.5" fill="#202020">90% White</text><text x="1744" y="1001" font-family="Liberation Serif" font-size="13.5" fill="#202020">90% White</text><polyline points="468.5,415.0 543.7,573.0 618.9,571.0 693.8,557.7 768.0,584.3 842.9,581.7 918.0,585.7 992.6,584.0 1067.0,590.6 1141.8,585.4 1217.0,585.4 1291.8,584.8 1365.6,585.8 1440.8,587.0 1515.6,586.0 1590.8,586.0 1665.0,586.0 1739.3,589.0 1814.6,591.8 1888.0,593.7" fill="none" stroke="#ff0000" stroke-width="2" clip-path="url(#cp)"/><rect x="464" y="411" width="8" height="8" fill="#ff0000"/><rect x="540" y="569" width="8" height="8" fill="#ff0000"/><rect x="615" y="567" width="8" height="8" fill="#ff0000"/><rect x="690" y="554" width="8" height="8" fill="#ff0000"/><rect x="764" y="580" width="8" height="8" fill="#ff0000"/><rect x="839" y="578" width="8" height="8" fill="#ff0000"/><rect x="914" y="582" width="8" height="8" fill="#ff0000"/><rect x="989" y="580" width="8" height="8" fill="#ff0000"/><rect x="1063" y="587" width="8" height="8" fill="#ff0000"/><rect x="1138" y="581" width="8" height="8" fill="#ff0000"/><rect x="1213" y="581" width="8" height="8" fill="#ff0000"/><rect x="1288" y="581" width="8" height="8" fill="#ff0000"/><rect x="1362" y="582" width="8" height="8" fill="#ff0000"/><rect x="1437" y="583" width="8" height="8" fill="#ff0000"/><rect x="1512" y="582" width="8" height="8" fill="#ff0000"/><rect x="1587" y="582" width="8" height="8" fill="#ff0000"/><rect x="1661" y="582" width="8" height="8" fill="#ff0000"/><rect x="1735" y="585" width="8" height="8" fill="#ff0000"/><rect x="1811" y="588" width="8" height="8" fill="#ff0000"/><rect x="1884" y="590" width="8" height="8" fill="#ff0000"/><polyline points="468.5,420.5 543.7,571.7 618.9,553.3 693.8,546.7 768.0,565.7 842.9,563.3 918.0,560.0 992.6,567.7 1067.0,572.3 1141.8,570.8 1217.0,570.8 1291.8,571.2 1365.6,572.3 1440.8,574.0 1515.6,575.0 1590.8,575.0 1665.0,574.0 1739.3,575.0 1814.6,577.4 1888.0,581.2" fill="none" stroke="#00ff00" stroke-width="2" clip-path="url(#cp)"/><rect x="464" y="416" width="8" height="8" fill="#00ff00"/><rect x="540" y="568" width="8" height="8" fill="#00ff00"/><rect x="615" y="549" width="8" height="8" fill="#00ff00"/><rect x="690" y="543" width="8" height="8" fill="#00ff00"/><rect x="764" y="562" width="8" height="8" fill="#00ff00"/><rect x="839" y="559" width="8" height="8" fill="#00ff00"/><rect x="914" y="556" width="8" height="8" fill="#00ff00"/><rect x="989" y="564" width="8" height="8" fill="#00ff00"/><rect x="1063" y="568" width="8" height="8" fill="#00ff00"/><rect x="1138" y="567" width="8" height="8" fill="#00ff00"/><rect x="1213" y="567" width="8" height="8" fill="#00ff00"/><rect x="1288" y="567" width="8" height="8" fill="#00ff00"/><rect x="1362" y="568" width="8" height="8" fill="#00ff00"/><rect x="1437" y="570" width="8" height="8" fill="#00ff00"/><rect x="1512" y="571" width="8" height="8" fill="#00ff00"/><rect x="1587" y="571" width="8" height="8" fill="#00ff00"/><rect x="1661" y="570" width="8" height="8" fill="#00ff00"/><rect x="1735" y="571" width="8" height="8" fill="#00ff00"/><rect x="1811" y="573" width="8" height="8" fill="#00ff00"/><rect x="1884" y="577" width="8" height="8" fill="#00ff00"/><polyline points="468.5,407.0 543.7,564.3 618.9,553.3 693.8,550.7 768.0,569.0 842.9,556.7 918.0,561.7 992.6,561.7 1067.0,566.0 1141.8,565.6 1217.0,563.5 1291.8,563.5 1365.6,565.6 1440.8,566.4 1515.6,567.4 1590.8,567.4 1665.0,570.7 1739.3,572.6 1814.6,575.5 1888.0,577.4" fill="none" stroke="#0000ff" stroke-width="2" clip-path="url(#cp)"/><rect x="464" y="403" width="8" height="8" fill="#0000ff"/><rect x="540" y="560" width="8" height="8" fill="#0000ff"/><rect x="615" y="549" width="8" height="8" fill="#0000ff"/><rect x="690" y="547" width="8" height="8" fill="#0000ff"/><rect x="764" y="565" width="8" height="8" fill="#0000ff"/><rect x="839" y="553" width="8" height="8" fill="#0000ff"/><rect x="914" y="558" width="8" height="8" fill="#0000ff"/><rect x="989" y="558" width="8" height="8" fill="#0000ff"/><rect x="1063" y="562" width="8" height="8" fill="#0000ff"/><rect x="1138" y="562" width="8" height="8" fill="#0000ff"/><rect x="1213" y="560" width="8" height="8" fill="#0000ff"/><rect x="1288" y="560" width="8" height="8" fill="#0000ff"/><rect x="1362" y="562" width="8" height="8" fill="#0000ff"/><rect x="1437" y="562" width="8" height="8" fill="#0000ff"/><rect x="1512" y="563" width="8" height="8" fill="#0000ff"/><rect x="1587" y="563" width="8" height="8" fill="#0000ff"/><rect x="1661" y="567" width="8" height="8" fill="#0000ff"/><rect x="1735" y="569" width="8" height="8" fill="#0000ff"/><rect x="1811" y="572" width="8" height="8" fill="#0000ff"/><rect x="1884" y="573" width="8" height="8" fill="#0000ff"/><polyline points="468.5,995.0 543.7,999.0 618.9,977.0 693.8,975.0 768.0,967.0 842.9,959.0 918.0,940.0 992.6,955.0 1067.0,949.0 1141.8,946.0 1217.0,948.0 1291.8,950.0 1365.6,950.0 1440.8,948.0 1515.6,953.0 1590.8,949.0 1665.0,946.0 1739.3,940.0 1814.6,931.0 1888.0,931.0" fill="none" stroke="#ff00ff" stroke-width="2" clip-path="url(#cp)"/><rect x="464" y="991" width="8" height="8" fill="#ff00ff"/><rect x="540" y="995" width="8" height="8" fill="#ff00ff"/><rect x="615" y="973" width="8" height="8" fill="#ff00ff"/><rect x="690" y="971" width="8" height="8" fill="#ff00ff"/><rect x="764" y="963" width="8" height="8" fill="#ff00ff"/><rect x="839" y="955" width="8" height="8" fill="#ff00ff"/><rect x="914" y="936" width="8" height="8" fill="#ff00ff"/><rect x="989" y="951" width="8" height="8" fill="#ff00ff"/><rect x="1063" y="945" width="8" height="8" fill="#ff00ff"/><rect x="1138" y="942" width="8" height="8" fill="#ff00ff"/><rect x="1213" y="944" width="8" height="8" fill="#ff00ff"/><rect x="1288" y="946" width="8" height="8" fill="#ff00ff"/><rect x="1362" y="946" width="8" height="8" fill="#ff00ff"/><rect x="1437" y="944" width="8" height="8" fill="#ff00ff"/><rect x="1512" y="949" width="8" height="8" fill="#ff00ff"/><rect x="1587" y="945" width="8" height="8" fill="#ff00ff"/><rect x="1661" y="942" width="8" height="8" fill="#ff00ff"/><rect x="1735" y="936" width="8" height="8" fill="#ff00ff"/><rect x="1811" y="927" width="8" height="8" fill="#ff00ff"/><rect x="1884" y="927" width="8" height="8" fill="#ff00ff"/><text x="1055" y="457" font-family="Liberation Sans" font-weight="bold" font-size="14.5" fill="#dcd810">Gray Scale Balance w/gamma</text><text x="1725" y="963" font-family="Liberation Sans" font-weight="bold" font-size="16" fill="#888888">hcfr.sourceforge.net</text></svg>
<div class="a" style="left:2px;top:1021px;width:1899px;height:21px;background:#f0f0f0;"></div>
<div class="a" style="left:19px;top:1030px;width:1825px;height:2px;background:#8a8a8a;"></div>
<div class="a" style="left:0px;top:1021px;width:2px;height:21px;background:#909090;"></div>
<div class="a" style="left:0px;top:1042px;width:1920px;height:1px;background:#000;"></div>
<div class="a" style="left:0px;top:1043px;width:1920px;height:18px;background:#f0f0f0;"></div>
<div class="a" style="left:0px;top:1043px;width:54px;height:17px;background:#f0f0f0;border:1px solid #000;border-top:none;"></div>
<div class="a" style="left:17px;top:1043px;width:1px;height:17px;background:#999;"></div>
<div class="a" style="left:35px;top:1043px;width:1px;height:17px;background:#999;"></div>
<svg class="a" style="left:0;top:1043px" width="54" height="17"><path d="M5 4 L12 11 M12 4 L5 11" stroke="#000" stroke-width="1.2"/><path d="M28 4 V12 L23 8 Z" fill="#000"/><path d="M42 4 V12 L47 8 Z" fill="#000"/></svg>
<svg class="a" style="left:50px;top:1042px" width="300" height="19" viewBox="50 1042 300 19"><path d="M54 1042.5 L63 1060 L119 1060 L128 1042.5 Z" fill="#fff"/><g fill="none" stroke="#000" stroke-width="1.1"><path d="M54 1042.5 L63 1060 M128 1042.5 L119 1060"/><path d="M123.5 1051 L127.5 1060 M171 1042.5 L175.5 1051 L171 1060 M175.5 1051 L179 1060"/><path d="M239 1042.5 L243.5 1051 L239 1060 M243.5 1051 L247 1060 M321 1042.5 L312.5 1060"/></g><path d="M127 1059.5 H313" stroke="#8a8a8a" stroke-width="1"/></svg>
<div class="t" style="left:66px;top:1046.7px;font-size:11px;font-weight:bold;color:#000;font-family:'Liberation Sans',sans-serif;">Measures</div>
<div class="t" style="left:132px;top:1047.5px;font-size:10px;color:#000;font-family:'Liberation Sans',sans-serif;transform:scaleX(0.95);transform-origin:0 0;">Gamma</div>
<div class="t" style="left:186px;top:1047.5px;font-size:10px;color:#000;font-family:'Liberation Sans',sans-serif;transform:scaleX(0.93);transform-origin:0 0;">Luminance</div>
<div class="t" style="left:255px;top:1047.5px;font-size:10px;color:#000;font-family:'Liberation Sans',sans-serif;transform:scaleX(0.95);transform-origin:0 0;">RGB Levels</div>
<div class="a" style="left:1846px;top:1044px;width:13px;height:13px;background:#fff;border-top:2px solid #7a7a7a;border-left:2px solid #7a7a7a;border-right:1px solid #e0e0e0;border-bottom:1px solid #e0e0e0;"></div>
<div class="t" style="left:1864px;top:1045.3px;font-size:12px;color:#000;font-family:'Liberation Sans',sans-serif;transform:scaleX(0.91);transform-origin:0 0;">Reference</div>
<svg class="a" style="left:1751px;top:1044px" width="15" height="14" viewBox="0 0 15 14"><path d="M0.5 0.5 H13.5 V9 L12 13.5 H9 L8 10 H6 L5 13.5 H2 L0.5 9 Z" fill="#808000" stroke="#000" stroke-width="1"/><path d="M2 4 Q3 1.5 6 2 L8 2 V0.8 L11 3.5 L8 6 V4.5 H6 Q4 4.5 4 6 Z" fill="#ff2020" stroke="#fff" stroke-width="0.5"/><path d="M9 8.5 H14 L13 12.5 H10Z" fill="#ffff00" stroke="#000" stroke-width="0.8"/></svg>
<div class="a" style="left:0px;top:1061px;width:1920px;height:19px;background:#e6edf7;"></div>
<div class="t" style="left:2px;top:1065.3px;font-size:12px;color:#111;font-family:'Liberation Sans',sans-serif;transform:scaleX(0.91);transform-origin:0 0;">Ready</div>
<div class="a" style="left:1742px;top:1062px;width:76px;height:18px;background:#edf2fa;border-left:1px solid #9cb0cc;border-top:1px solid #9cb0cc;"></div>
<div class="a" style="left:1820px;top:1062px;width:29px;height:18px;background:#edf2fa;border-left:1px solid #9cb0cc;border-top:1px solid #9cb0cc;"></div>
<div class="a" style="left:1851px;top:1062px;width:34px;height:18px;background:#edf2fa;border-left:1px solid #9cb0cc;border-top:1px solid #9cb0cc;"></div>
<div class="a" style="left:1887px;top:1062px;width:33px;height:18px;background:#edf2fa;border-left:1px solid #9cb0cc;border-top:1px solid #9cb0cc;"></div>
<div class="t" style="left:1854px;top:1065.8px;font-size:12px;color:#111;font-family:'Liberation Sans',sans-serif;transform:scaleX(0.97);transform-origin:0 0;">NUM</div>
</body></html>
